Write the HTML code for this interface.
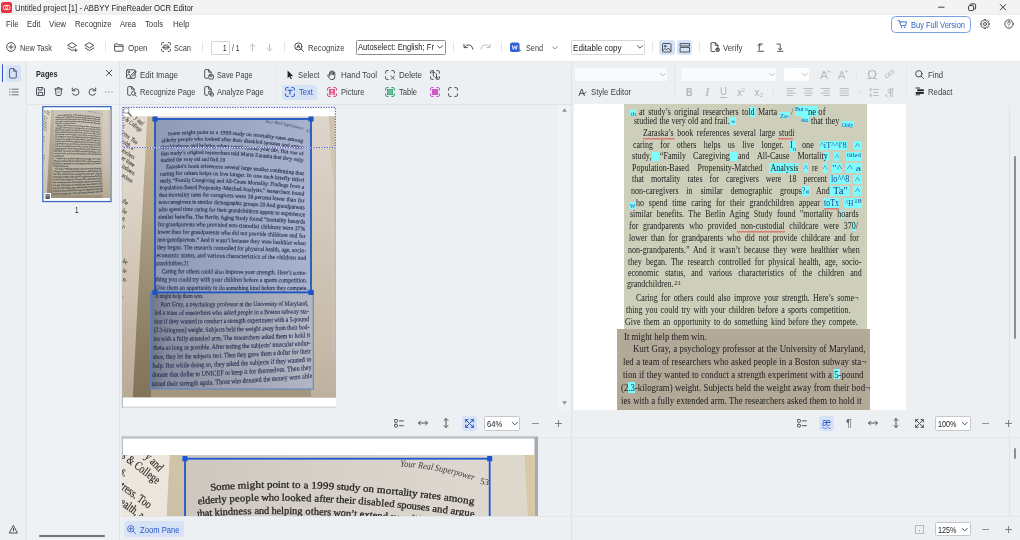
<!DOCTYPE html>
<html><head><meta charset="utf-8"><title>ABBYY FineReader OCR Editor</title>
<style>
*{box-sizing:border-box;margin:0;padding:0}
html,body{width:1020px;height:540px;overflow:hidden;background:#ecf0f3;font-family:"Liberation Sans",sans-serif;color:#2b2b2b}
#app{position:relative;width:1020px;height:540px;overflow:hidden}
.abs{position:absolute}
.t{position:absolute;white-space:pre;font-size:8.6px;line-height:12px;height:12px;color:#3a3d42;transform-origin:0 50%}
svg{position:absolute;overflow:visible}
.ic{stroke:#4d525a;fill:none;stroke-width:1;stroke-linecap:round;stroke-linejoin:round}
.ig{stroke:#b9bec6;fill:none;stroke-width:1;stroke-linecap:round;stroke-linejoin:round}
.sep{position:absolute;width:1px;background:#dcdfe4}

</style></head><body><div id="app">
<div class="abs" style="left:0px;top:0px;width:1020px;height:15.3px;background:linear-gradient(#f3f3f3 0,#f3f3f3 12.800px,#eeeeee 13.800px,#f0f0f0 14.600px,#fbfbfb 15.300px)"></div>
<div class="abs" style="left:0px;top:15.3px;width:1020px;height:45.7px;background:#fff"></div>
<div class="abs" style="left:0px;top:61px;width:1020px;height:1px;background:#e7eaed"></div>
<svg style="left:1px;top:2px" width="11" height="11" viewBox="0 0 11 11" ><rect x="0" y="0" width="11" height="11" rx="2.6" fill="#e8323c"/><circle cx="4.4" cy="5.5" r="2.3" fill="none" stroke="#fff" stroke-width="0.8"/><circle cx="6.8" cy="5.5" r="2.3" fill="none" stroke="#fff" stroke-width="0.8"/></svg>
<span class="t" style="left:15px;top:2px;font-size:8.8px;color:#1f1f1f;transform:scaleX(0.878);">Untitled project [1] - ABBYY FineReader OCR Editor</span>
<svg style="left:936px;top:2px" width="80" height="12" viewBox="0 0 80 12" ><path d="M2 5.2h6.5" stroke="#333" stroke-width="0.9" fill="none"/><rect x="32.6" y="3.6" width="5" height="5" rx="1" stroke="#222" stroke-width="0.9" fill="none"/><path d="M34.2 3.4v-0.6q0-0.9 0.9-0.9h3.3q1.2 0 1.2 1.2v3.2q0 0.9-0.9 0.9h-0.7" stroke="#222" stroke-width="0.9" fill="none"/><path d="M64 2.2l6 6M70 2.2l-6 6" stroke="#222" stroke-width="0.9" fill="none"/></svg>
<span class="t" style="left:5.5px;top:18.3px;font-size:8.8px;color:#33363b;transform:scaleX(0.881);">File</span>
<span class="t" style="left:26.7px;top:18.3px;font-size:8.8px;color:#33363b;transform:scaleX(0.877);">Edit</span>
<span class="t" style="left:49px;top:18.3px;font-size:8.8px;color:#33363b;transform:scaleX(0.898);">View</span>
<span class="t" style="left:74.5px;top:18.3px;font-size:8.8px;color:#33363b;transform:scaleX(0.878);">Recognize</span>
<span class="t" style="left:120px;top:18.3px;font-size:8.8px;color:#33363b;transform:scaleX(0.861);">Area</span>
<span class="t" style="left:145px;top:18.3px;font-size:8.8px;color:#33363b;transform:scaleX(0.876);">Tools</span>
<span class="t" style="left:172.5px;top:18.3px;font-size:8.8px;color:#33363b;transform:scaleX(0.912);">Help</span>
<div class="abs" style="left:891px;top:15.5px;width:79.5px;height:17.5px;border:1px solid #7a9fe3;border-radius:4.5px;background:#fff"></div>
<svg style="left:896.5px;top:19px" width="11" height="10" viewBox="0 0 11 10" ><path d="M1 1.6h1.4l1.5 5h4.6l1.1-3.7H3.2" stroke="#2f62c5" stroke-width="0.9" fill="none" stroke-linejoin="round" stroke-linecap="round"/><circle cx="4.6" cy="8.3" r="0.7" fill="#2f62c5"/><circle cx="7.8" cy="8.3" r="0.7" fill="#2f62c5"/></svg>
<span class="t" style="left:911px;top:19px;font-size:8.8px;color:#2f62c5;transform:scaleX(0.850);">Buy Full Version</span>
<svg style="left:980px;top:19px" width="10" height="10" viewBox="0 0 10 10" ><path d="M8.26 3.72L8.42 4.26L9.44 4.26L9.44 5.74L8.42 5.74L8.21 6.40L7.94 6.89L8.66 7.62L7.62 8.66L6.89 7.94L6.28 8.26L5.74 8.42L5.74 9.44L4.26 9.44L4.26 8.42L3.60 8.21L3.11 7.94L2.38 8.66L1.34 7.62L2.06 6.89L1.74 6.28L1.58 5.74L0.56 5.74L0.56 4.26L1.58 4.26L1.79 3.60L2.06 3.11L1.34 2.38L2.38 1.34L3.11 2.06L3.72 1.74L4.26 1.58L4.26 0.56L5.74 0.56L5.74 1.58L6.40 1.79L6.89 2.06L7.62 1.34L8.66 2.38L7.94 3.11z" class="ic" stroke-width="0.700"/><circle cx="5" cy="5" r="1.500" class="ic" stroke-width="0.700"/></svg>
<svg style="left:1004px;top:19px" width="10" height="10" viewBox="0 0 10 10" ><circle cx="5" cy="5" r="4.2" class="ic" stroke-width="0.8"/><path d="M3.7 4q0-1.4 1.3-1.4t1.3 1.2q0 0.8-0.7 1.2t-0.6 1" class="ic" stroke-width="0.8"/><circle cx="5" cy="7.5" r="0.45" fill="#4d525a"/></svg>
<svg style="left:5.7px;top:42px" width="10" height="10" viewBox="0 0 10 10" ><circle cx="5" cy="5" r="4.4" class="ic" stroke-width="0.8"/><path d="M5 2.9v4.2M2.9 5h4.2" class="ic" stroke-width="0.8"/></svg>
<span class="t" style="left:20px;top:41.5px;font-size:8.8px;color:#3a3d42;transform:scaleX(0.842);">New Task</span>
<svg style="left:66.5px;top:42px" width="11" height="11" viewBox="0 0 11 11" ><path d="M5.200 0.800l4.300 2.600-4.300 2.600-4.300-2.600z" class="ic" stroke-width="0.8"/><path d="M0.900 6l4.300 2.600 1.500-0.900" class="ic" stroke-width="0.8"/><path d="M8.700 6.800v2.800M7.300 8.200h2.800" class="ic" stroke-width="0.8"/></svg>
<svg style="left:83.5px;top:42px" width="11" height="11" viewBox="0 0 11 11" ><path d="M5.500 0.800l4.300 2.600-4.300 2.600-4.300-2.600z" class="ic" stroke-width="0.8"/><path d="M1.200 6l4.300 2.600 4.300-2.600" class="ic" stroke-width="0.8"/></svg>
<div class="sep" style="left:104.5px;top:42px;height:10px;background:#e4e6e9"></div>
<svg style="left:114.3px;top:43px" width="10" height="9" viewBox="0 0 10 9" ><path d="M0.600 1.600q0-0.800 0.800-0.800h2l0.900 1h3.900q0.800 0 0.800 0.800v4.800q0 0.800-0.800 0.800h-6.800q-0.800 0-0.800-0.800zM0.600 3.300h8.400" class="ic" stroke-width="0.8"/></svg>
<span class="t" style="left:127.5px;top:41.5px;font-size:8.8px;color:#3a3d42;transform:scaleX(0.906);">Open</span>
<svg style="left:161px;top:42px" width="10" height="10" viewBox="0 0 10 10" ><path d="M0.600 2.800v-1.400q0-0.800 0.800-0.800h1.400M7.200 0.600h1.400q0.800 0 0.800 0.800v1.400M9.400 7.200v1.400q0 0.800-0.800 0.800h-1.400M2.800 9.400h-1.400q-0.800 0-0.800-0.800v-1.400" class="ic" stroke-width="0.700"/><path d="M2.900 5.200v-1.600q0-0.500 0.500-0.500h3.200q0.500 0 0.500 0.500v1.600M2.900 5.200v1.300q0 0.500 0.500 0.500h3.200q0.500 0 0.500-0.500v-1.300" class="ic" stroke-width="0.650"/><path d="M1.200 5.200h7.600" class="ic" stroke-width="0.700"/></svg>
<span class="t" style="left:174px;top:41.5px;font-size:8.8px;color:#3a3d42;transform:scaleX(0.847);">Scan</span>
<div class="sep" style="left:202px;top:42px;height:10px;background:#e4e6e9"></div>
<div class="abs" style="left:211px;top:40.5px;width:18.5px;height:14px;border:1px solid #d0d3d7;border-radius:1px;background:#fff"></div>
<span class="t" style="left:222.5px;top:41.7px;font-size:8.8px;color:#222;transform:scaleX(0.713);">1</span>
<span class="t" style="left:232px;top:41.7px;font-size:8.8px;color:#333;transform:scaleX(0.767);">/ 1</span>
<svg style="left:247.5px;top:42.5px" width="9" height="9" viewBox="0 0 9 9" ><path d="M4.500 8v-6.800M1.800 3.800l2.700-2.700 2.700 2.700" class="ig" stroke-width="0.8"/></svg>
<svg style="left:264.5px;top:42.5px" width="9" height="9" viewBox="0 0 9 9" ><path d="M4.500 1v6.800M1.800 5.200l2.700 2.700 2.700-2.700" class="ig" stroke-width="0.8"/></svg>
<div class="sep" style="left:284px;top:42px;height:10px;background:#e4e6e9"></div>
<svg style="left:294px;top:42px" width="10" height="10" viewBox="0 0 10 10" ><circle cx="4.400" cy="4.400" r="3.600" class="ic" stroke-width="0.8"/><path d="M7 7l2.400 2.400" class="ic" stroke-width="0.8"/><path d="M2.900 6l1.500-3.400 1.500 3.400M3.500 4.900h1.800" class="ic" stroke-width="0.600"/></svg>
<span class="t" style="left:307.5px;top:41.5px;font-size:8.8px;color:#3a3d42;transform:scaleX(0.878);">Recognize</span>
<div class="abs" style="left:355.5px;top:40px;width:90.5px;height:14.5px;border:1px solid #8a8d92;border-radius:1.500px;background:#fff"></div>
<span class="t" style="left:358px;top:41.3px;font-size:8.8px;color:#222;transform:scaleX(0.863);">Autoselect: English; Fr</span>
<svg style="left:437px;top:45px" width="6" height="4" viewBox="0 0 6 4" ><path d="M0.500 0.700l2.500 2.500 2.500-2.500" class="ic" stroke-width="0.700"/></svg>
<div class="sep" style="left:452.5px;top:42px;height:10px;background:#e4e6e9"></div>
<svg style="left:462.5px;top:42.5px" width="11" height="8" viewBox="0 0 11 8" ><path d="M1 1.300v3.300h3.300M1.300 4.400q2-2.900 4.900-2.600 3 0.400 3.700 4.400" class="ic" stroke-width="0.800"/></svg>
<svg style="left:479.5px;top:42.5px" width="11" height="8" viewBox="0 0 11 8" ><path d="M10 1.300v3.300h-3.300M9.700 4.400q-2-2.900-4.900-2.600-3 0.400-3.700 4.400" class="ig" stroke-width="0.800"/></svg>
<div class="sep" style="left:501px;top:42px;height:10px;background:#e4e6e9"></div>
<svg style="left:509.5px;top:42px" width="11" height="11" viewBox="0 0 11 11" ><rect x="0" y="0.500" width="9.500" height="9.500" rx="2" fill="#2c5fd8"/><path d="M2.200 3.200l1.100 4.200 1.400-3.600 1.400 3.600 1.100-4.200" stroke="#fff" stroke-width="0.900" fill="none" stroke-linejoin="round"/><path d="M7.500 8.500h3M9.300 7.200l1.300 1.300-1.300 1.300" stroke="#555" stroke-width="0.700" fill="none"/></svg>
<span class="t" style="left:526px;top:41.5px;font-size:8.8px;color:#3a3d42;transform:scaleX(0.827);">Send</span>
<svg style="left:551.5px;top:45.5px" width="6" height="4" viewBox="0 0 6 4" ><path d="M0.500 0.700l2.300 2.300 2.300-2.300" class="ic" style="stroke:#888" stroke-width="0.700"/></svg>
<div class="abs" style="left:571px;top:40px;width:74px;height:14.5px;border:1px solid #d4d6da;border-radius:1.500px;background:#fff"></div>
<span class="t" style="left:572.5px;top:41.7px;font-size:9.2px;color:#222;transform:scaleX(0.879);">Editable copy</span>
<svg style="left:636.5px;top:45px" width="6" height="4" viewBox="0 0 6 4" ><path d="M0.500 0.700l2.500 2.500 2.500-2.500" class="ic" stroke-width="0.700"/></svg>
<div class="sep" style="left:652px;top:42px;height:10px;background:#e4e6e9"></div>
<div class="abs" style="left:659px;top:39.5px;width:15.5px;height:15.5px;background:#d5e3f8;border-radius:3px"></div>
<div class="abs" style="left:676.5px;top:39.5px;width:15.5px;height:15.5px;background:#d5e3f8;border-radius:3px"></div>
<svg style="left:662px;top:42.5px" width="10" height="10" viewBox="0 0 10 10" ><rect x="0.500" y="0.500" width="8.500" height="8.500" rx="0.800" class="ic" stroke-width="0.8"/><circle cx="3.100" cy="3.200" r="0.900" class="ic" stroke-width="0.700"/><path d="M0.700 7.800l2.400-2.400 1.600 1.600 1.600-2 2.600 3" class="ic" stroke-width="0.700"/></svg>
<svg style="left:679.5px;top:42.5px" width="10" height="10" viewBox="0 0 10 10" ><rect x="0.500" y="0.600" width="9" height="2.400" class="ic" stroke-width="0.800" fill="#4d525a"/><rect x="0.500" y="4.400" width="9" height="4.600" class="ic" stroke-width="0.8"/></svg>
<div class="sep" style="left:699px;top:42px;height:10px;background:#e4e6e9"></div>
<svg style="left:709.5px;top:42px" width="11" height="11" viewBox="0 0 11 11" ><path d="M1 1.500q0-0.800 0.800-0.800h3.600l2.600 2.600v2.200M4.600 9.600h-2.800q-0.800 0-0.800-0.800v-7.300M5.300 0.800v2.600h2.600" class="ic" stroke-width="0.8"/><circle cx="7.600" cy="7.800" r="2.300" fill="#4d525a"/><path d="M6.500 7.800l0.800 0.800 1.400-1.500" stroke="#fff" stroke-width="0.600" fill="none"/></svg>
<span class="t" style="left:723px;top:41.5px;font-size:8.8px;color:#3a3d42;transform:scaleX(0.886);">Verify</span>
<svg style="left:757px;top:42.5px" width="8" height="9" viewBox="0 0 8 9" ><path d="M5.500 1h-3.200v6M0.800 2.500l1.500-1.500 1.500 1.500M1 8.300h5.500" class="ic" stroke-width="0.8"/></svg>
<svg style="left:776px;top:42.5px" width="8" height="9" viewBox="0 0 8 9" ><path d="M1 1h3.200v6M2.700 5.500l1.500 1.500 1.500-1.500M1.500 8.300h5.500" class="ic" stroke-width="0.8"/></svg>
<div class="abs" style="left:0px;top:61px;width:26px;height:479px;background:#ecf0f3"></div>
<div class="abs" style="left:26px;top:61px;width:93.5px;height:479px;background:#eff2f5"></div>
<div class="sep" style="left:26px;top:61px;height:479px;background:#e1e5ea"></div>
<div class="sep" style="left:119px;top:61px;height:479px;background:#dfe3e8"></div>
<div class="abs" style="left:1.5px;top:64px;width:1.7px;height:18px;background:#2b57c6;border-radius:1px"></div>
<div class="abs" style="left:5.7px;top:65px;width:15.8px;height:16.5px;background:#d6e3f7;border-radius:3px"></div>
<svg style="left:9px;top:67.5px" width="8" height="10.5" viewBox="0 0 8 10.5" ><path d="M0.600 1.600q0-1 1-1h3.200l2.500 2.500v6q0 1-1 1h-4.700q-1 0-1-1zM4.700 0.700v2.500h2.500" stroke="#3b4d7a" stroke-width="0.900" fill="none" stroke-linejoin="round"/></svg>
<svg style="left:8.5px;top:88px" width="10" height="8" viewBox="0 0 10 8" ><path d="M3 1.200h6.200M3 4h6.200M3 6.800h6.200" class="ic" style="stroke:#6a6f78" stroke-width="0.800"/><path d="M0.600 1.200h0.600M0.600 4h0.600M0.600 6.800h0.600" class="ic" style="stroke:#6a6f78" stroke-width="0.800"/></svg>
<span class="t" style="left:36px;top:67.8px;font-size:9px;color:#1f2328;transform:scaleX(0.810);font-weight:bold;">Pages</span>
<svg style="left:106px;top:69.8px" width="6" height="6" viewBox="0 0 6 6" ><path d="M0.400 0.400l5.200 5.200M5.600 0.400l-5.200 5.200" class="ic" stroke-width="0.700"/></svg>
<svg style="left:36.3px;top:87px" width="9" height="9" viewBox="0 0 9 9" ><path d="M0.500 1.300q0-0.800 0.800-0.800h5.700l1.500 1.500v5.700q0 0.800-0.800 0.800h-6.400q-0.800 0-0.800-0.800zM2.300 0.600v2.500h3.800v-2.500M2.300 8.400v-3h4.400v3" class="ic" stroke-width="0.8"/></svg>
<svg style="left:53.5px;top:87px" width="9" height="9" viewBox="0 0 9 9" ><path d="M0.600 2h7.800M3 1.900v-0.800q0-0.500 0.500-0.500h2q0.500 0 0.500 0.500v0.800M1.500 2.100l0.500 5.600q0.100 0.800 0.900 0.800h3.200q0.800 0 0.900-0.800l0.500-5.600" class="ic" stroke-width="0.8"/><rect x="3.400" y="3.800" width="2.200" height="2.600" fill="#b5bac2"/></svg>
<svg style="left:70.5px;top:87px" width="9" height="9" viewBox="0 0 9 9" ><path d="M1.300 1v2.800h2.800M1.500 3.700q1.200-1.900 3.300-1.900 3.200 0 3.200 3.300 0 3.200-3.400 3.200-2.300 0-3.100-1.900" class="ic" stroke-width="0.8"/></svg>
<svg style="left:87.5px;top:87px" width="9" height="9" viewBox="0 0 9 9" ><path d="M7.700 1v2.800h-2.800M7.500 3.700q-1.200-1.900-3.300-1.900-3.200 0-3.200 3.300 0 3.200 3.400 3.200 2.300 0 3.100-1.900" class="ic" stroke-width="0.8"/></svg>
<svg style="left:105px;top:90.5px" width="8" height="2" viewBox="0 0 8 2" ><circle cx="1" cy="1" r="0.550" fill="#4d525a"/><circle cx="4" cy="1" r="0.550" fill="#4d525a"/><circle cx="7" cy="1" r="0.550" fill="#4d525a"/></svg>
<div class="abs" style="left:26.5px;top:104px;width:93px;height:1px;background:#e1e5ea"></div>
<svg style="left:126.2px;top:69.4px" width="10" height="10" viewBox="0 0 10 10" ><rect x="0.500" y="0.800" width="8.600" height="8.600" rx="1" class="ic" stroke-width="0.8"/><path d="M0.700 7l2-2 1.500 1.500" class="ic" stroke-width="0.700"/><circle cx="2.800" cy="3" r="0.800" class="ic" stroke-width="0.600"/><path d="M4.200 8.200l0.400-1.700 4.200-4.200q0.600-0.600 1.200 0t0 1.200l-4.200 4.200z" class="ic" stroke-width="0.700" fill="#edf1f5"/></svg>
<span class="t" style="left:140px;top:68.9px;font-size:8.8px;color:#3a3d42;transform:scaleX(0.903);">Edit Image</span>
<svg style="left:204px;top:69.2px" width="10" height="10.5" viewBox="0 0 10 10.5" ><path d="M3.600 9.200h-2.100q-0.800 0-0.800-0.800v-7q0-0.800 0.800-0.800h3.200l2.500 2.500v1.400M4.600 0.700v2.500h2.500" class="ic" stroke-width="0.8"/><rect x="4.800" y="5.800" width="4.600" height="4.200" rx="0.600" class="ic" stroke-width="0.700"/><path d="M6 5.900v1.300h2v-1.300" class="ic" stroke-width="0.600"/></svg>
<span class="t" style="left:216.8px;top:68.9px;font-size:8.8px;color:#3a3d42;transform:scaleX(0.827);">Save Page</span>
<svg style="left:126.5px;top:86.4px" width="10" height="10.5" viewBox="0 0 10 10.5" ><path d="M3.600 9.200h-2.100q-0.800 0-0.800-0.800v-7q0-0.800 0.800-0.800h3.200l2.500 2.500v1.400M4.600 0.700v2.500h2.500" class="ic" stroke-width="0.8"/><circle cx="6.400" cy="7.300" r="1.900" class="ic" stroke-width="0.700"/><path d="M7.800 8.700l1.500 1.500" class="ic" stroke-width="0.8"/></svg>
<span class="t" style="left:140px;top:86.2px;font-size:8.8px;color:#3a3d42;transform:scaleX(0.857);">Recognize Page</span>
<svg style="left:204px;top:86.4px" width="10" height="10.5" viewBox="0 0 10 10.5" ><path d="M3.600 9.200h-2.100q-0.800 0-0.800-0.800v-7q0-0.800 0.800-0.800h3.200l2.500 2.500v1.400M4.600 0.700v2.500h2.500" class="ic" stroke-width="0.8"/><rect x="4.700" y="5.400" width="3" height="3" rx="0.500" class="ic" stroke-width="0.700"/><rect x="6.400" y="7" width="3" height="3" rx="0.500" class="ic" stroke-width="0.700" fill="#edf1f5"/></svg>
<span class="t" style="left:216.8px;top:86.2px;font-size:8.8px;color:#3a3d42;transform:scaleX(0.862);">Analyze Page</span>
<div class="sep" style="left:274.5px;top:66px;height:34px;background:#e4e7eb"></div>
<svg style="left:287px;top:69.5px" width="6" height="10" viewBox="0 0 6 10" ><path d="M0.600 0.600v7.600l1.900-1.700 1.300 2.800 1.100-0.500-1.300-2.700h2.500z" fill="#222" stroke="none"/></svg>
<span class="t" style="left:298px;top:68.9px;font-size:8.8px;color:#3a3d42;transform:scaleX(0.879);">Select</span>
<svg style="left:327px;top:69.5px" width="10" height="10" viewBox="0 0 10 10" ><path d="M2.600 5.800v-3.300q0-0.700 0.650-0.700t0.650 0.700v-1q0-0.700 0.650-0.700t0.650 0.700v0.300q0-0.700 0.650-0.700t0.650 0.700v0.900q0-0.700 0.650-0.700t0.650 0.700v4q0 3-2.800 3-1.700 0-2.700-1.500l-1.600-2.400q-0.400-0.700 0.200-1t1.100 0.300z" class="ic" stroke-width="0.700"/><path d="M3.900 2.500v2.200M5.200 2v2.700M6.500 2.500v2.200" class="ic" stroke-width="0.600"/></svg>
<span class="t" style="left:341px;top:68.9px;font-size:8.8px;color:#3a3d42;transform:scaleX(0.912);">Hand Tool</span>
<svg style="left:385px;top:69.5px" width="10" height="10" viewBox="0 0 10 10" ><path d="M0.6 3.2v-1.4000000000000001q0 -1.2 1.2 -1.2h1.4000000000000001M6.800000000000001 0.6h1.4000000000000001q1.2 0 1.2 1.2v1.4000000000000001M3.2 9.4h-1.4000000000000001q-1.2 0 -1.2 -1.2v-1.4000000000000001" class="ic" stroke-width="0.8"/><path d="M6 6l3.400 3.400M9.400 6l-3.400 3.400" class="ic" stroke-width="0.800"/><rect x="5" y="5" width="5" height="5" fill="none"/></svg>
<span class="t" style="left:399px;top:68.9px;font-size:8.8px;color:#3a3d42;transform:scaleX(0.904);">Delete</span>
<svg style="left:430px;top:69.5px" width="10" height="10" viewBox="0 0 10 10" ><path d="M0.6 3.2v-1.4000000000000001q0 -1.2 1.2 -1.2h1.4000000000000001M6.800000000000001 0.6h1.4000000000000001q1.2 0 1.2 1.2v1.4000000000000001M9.4 6.800000000000001v1.4000000000000001q0 1.2 -1.2 1.2h-1.4000000000000001M3.2 9.4h-1.4000000000000001q-1.2 0 -1.2 -1.2v-1.4000000000000001" class="ic" stroke-width="0.8"/><path d="M6.500 4v4.600M4.800 7l1.700 1.700 1.700-1.700M3.400 6v-4.600M1.700 3l1.700-1.700 1.700 1.700" class="ic" stroke-width="0.700"/></svg>
<div class="abs" style="left:282px;top:85px;width:35px;height:14.5px;background:#d6e3f7;border-radius:3px"></div>
<svg style="left:284.6px;top:86.7px" width="10" height="10" viewBox="0 0 10 10" ><path d="M0.6 3.2v-1.4000000000000001q0 -1.2 1.2 -1.2h1.4000000000000001M6.800000000000001 0.6h1.4000000000000001q1.2 0 1.2 1.2v1.4000000000000001M9.4 6.800000000000001v1.4000000000000001q0 1.2 -1.2 1.2h-1.4000000000000001M3.2 9.4h-1.4000000000000001q-1.2 0 -1.2 -1.2v-1.4000000000000001" class="ic" style="stroke:#2b57c6" stroke-width="0.8"/><path d="M3 3.200h4M5 3.200v4" stroke="#2b57c6" stroke-width="1.100" fill="none" stroke-linecap="round"/></svg>
<span class="t" style="left:299px;top:86.2px;font-size:8.8px;color:#2b57c6;transform:scaleX(0.867);">Text</span>
<svg style="left:327px;top:86.7px" width="10" height="10" viewBox="0 0 10 10" ><path d="M0.6 3.2v-1.4000000000000001q0 -1.2 1.2 -1.2h1.4000000000000001M6.800000000000001 0.6h1.4000000000000001q1.2 0 1.2 1.2v1.4000000000000001M9.4 6.800000000000001v1.4000000000000001q0 1.2 -1.2 1.2h-1.4000000000000001M3.2 9.4h-1.4000000000000001q-1.2 0 -1.2 -1.2v-1.4000000000000001" class="ic" style="stroke:#d23a7a" stroke-width="0.8"/><rect x="2" y="2" width="6" height="6" rx="0.800" fill="#e4568f"/><circle cx="5" cy="4.100" r="1" fill="#fbe3ec"/><path d="M2.800 7.600q2.200-2.800 4.400 0z" fill="#fbe3ec"/></svg>
<span class="t" style="left:341px;top:86.2px;font-size:8.8px;color:#3a3d42;transform:scaleX(0.858);">Picture</span>
<svg style="left:385px;top:86.7px" width="10" height="10" viewBox="0 0 10 10" ><path d="M0.6 3.2v-1.4000000000000001q0 -1.2 1.2 -1.2h1.4000000000000001M6.800000000000001 0.6h1.4000000000000001q1.2 0 1.2 1.2v1.4000000000000001M9.4 6.800000000000001v1.4000000000000001q0 1.2 -1.2 1.2h-1.4000000000000001M3.2 9.4h-1.4000000000000001q-1.2 0 -1.2 -1.2v-1.4000000000000001" class="ic" style="stroke:#1f9d6b" stroke-width="0.8"/><rect x="2" y="2" width="6" height="6" rx="0.500" fill="#1f9d6b"/><path d="M2 4h6M2 6h6M4 2v6M6 2v6" stroke="#cdeadf" stroke-width="0.500"/></svg>
<span class="t" style="left:399px;top:86.2px;font-size:8.8px;color:#3a3d42;transform:scaleX(0.856);">Table</span>
<svg style="left:430px;top:86.7px" width="10" height="10" viewBox="0 0 10 10" ><path d="M0.6 3.2v-1.4000000000000001q0 -1.2 1.2 -1.2h1.4000000000000001M6.800000000000001 0.6h1.4000000000000001q1.2 0 1.2 1.2v1.4000000000000001M9.4 6.800000000000001v1.4000000000000001q0 1.2 -1.2 1.2h-1.4000000000000001M3.2 9.4h-1.4000000000000001q-1.2 0 -1.2 -1.2v-1.4000000000000001" class="ic" style="stroke:#c24ad0" stroke-width="0.8"/><rect x="1.900" y="1.900" width="6.200" height="6.200" rx="0.900" fill="#cf58c8"/></svg>
<svg style="left:447.5px;top:86.7px" width="10" height="10" viewBox="0 0 10 10" ><path d="M0.6 3.2v-1.4000000000000001q0 -1.2 1.2 -1.2h1.4000000000000001M6.800000000000001 0.6h1.4000000000000001q1.2 0 1.2 1.2v1.4000000000000001M9.4 6.800000000000001v1.4000000000000001q0 1.2 -1.2 1.2h-1.4000000000000001M3.2 9.4h-1.4000000000000001q-1.2 0 -1.2 -1.2v-1.4000000000000001" class="ic" stroke-width="0.8"/></svg>
<div class="sep" style="left:570.5px;top:61px;height:479px;background:#dfe3e8"></div>
<div class="abs" style="left:574.8px;top:68px;width:92px;height:13px;background:#f8fafc;border-radius:1.500px"></div>
<svg style="left:659.5px;top:73px" width="6" height="4" viewBox="0 0 6 4" ><path d="M0.500 0.600l2.300 2.300 2.300-2.300" class="ig" stroke-width="0.700"/></svg>
<div class="sep" style="left:674.4px;top:64px;height:36px;background:#e2e6ea"></div>
<div class="abs" style="left:681.4px;top:68px;width:94.5px;height:13px;background:#f8fafc;border-radius:1.500px"></div>
<svg style="left:768.5px;top:73px" width="6" height="4" viewBox="0 0 6 4" ><path d="M0.500 0.600l2.300 2.300 2.300-2.300" class="ig" stroke-width="0.700"/></svg>
<div class="abs" style="left:783.8px;top:68px;width:25.7px;height:13px;background:#fdfdfe;border-radius:1.500px"></div>
<svg style="left:801.5px;top:73px" width="6" height="4" viewBox="0 0 6 4" ><path d="M0.500 0.600l2.300 2.300 2.300-2.300" class="ig" stroke-width="0.700"/></svg>
<span class="t" style="left:819.5px;top:69.2px;font-size:11.5px;color:#b4b9c0;transform:scaleX(1.043);">A</span>
<svg style="left:826.5px;top:69.5px" width="4" height="3" viewBox="0 0 4 3" ><path d="M0.400 2.200l1.300-1.500 1.300 1.500" class="ig" stroke-width="0.600"/></svg>
<span class="t" style="left:838px;top:69.2px;font-size:11px;color:#b4b9c0;transform:scaleX(1.021);">A</span>
<svg style="left:844.5px;top:69.5px" width="4" height="3" viewBox="0 0 4 3" ><path d="M0.400 0.700l1.300 1.500 1.300-1.500" class="ig" stroke-width="0.600"/></svg>
<div class="sep" style="left:856px;top:69px;height:11px;background:#e6e9ec"></div>
<span class="t" style="left:866.8px;top:69px;font-size:12px;color:#b4b9c0;transform:scaleX(1.135);">Ω</span>
<svg style="left:883.5px;top:69.3px" width="11" height="10" viewBox="0 0 11 10" ><path d="M4.700 6.300q-1.200-1.200 0-2.400l2-2q1.200-1.200 2.400 0t0 2.400l-1 1M6.300 3.700q1.200 1.200 0 2.400l-2 2q-1.200 1.200-2.400 0t0-2.400l1-1" class="ig" stroke-width="0.800"/></svg>
<div class="sep" style="left:906px;top:66px;height:34px;background:#e4e7eb"></div>
<svg style="left:914.5px;top:69.5px" width="9" height="9" viewBox="0 0 9 9" ><circle cx="3.800" cy="3.800" r="3.200" class="ic" stroke-width="0.800"/><path d="M6.200 6.200l2.400 2.400" class="ic" stroke-width="0.800"/></svg>
<span class="t" style="left:928px;top:68.9px;font-size:8.8px;color:#3a3d42;transform:scaleX(0.876);">Find</span>
<svg style="left:914.5px;top:87px" width="10" height="9" viewBox="0 0 10 9" ><path d="M0.500 1h4.500M0.500 7.800h4.500" stroke="#222" stroke-width="0.900" fill="none"/><rect x="2.200" y="2.300" width="6.600" height="1.900" fill="#222"/><rect x="0.800" y="5" width="8" height="1.900" fill="#222"/></svg>
<span class="t" style="left:928px;top:86.2px;font-size:8.8px;color:#3a3d42;transform:scaleX(0.879);">Redact</span>
<svg style="left:577.5px;top:87.5px" width="9" height="9" viewBox="0 0 9 9" ><path d="M1 7.600l2.700-6.600 2.700 6.600M1.900 5.400h3.600" class="ic" stroke-width="0.800"/><path d="M5.700 6.200l2.300-2.300" class="ic" stroke-width="0.800"/></svg>
<span class="t" style="left:590.5px;top:86.2px;font-size:8.8px;color:#3a3d42;transform:scaleX(0.894);">Style Editor</span>
<span class="t" style="left:685.8px;top:86.4px;font-size:11.5px;color:#aeb3ba;transform:scaleX(0.782);font-weight:bold;">B</span>
<span class="t" style="left:704.5px;top:85.9px;font-size:12px;color:#aeb3ba;transform:scaleX(1.125);font-family:'Liberation Serif',serif;font-style:italic;">I</span>
<span class="t" style="left:719.5px;top:86.2px;font-size:10px;color:#aeb3ba;transform:scaleX(0.968);">U</span>
<div class="abs" style="left:719.5px;top:97px;width:7px;height:0.8px;background:#b9bec6"></div>
<span class="t" style="left:737px;top:86.5px;font-size:10px;color:#aeb3ba;transform:scaleX(1.000);">x</span>
<span class="t" style="left:742.3px;top:83.9px;font-size:5.5px;color:#aeb3ba;transform:scaleX(0.980);">2</span>
<span class="t" style="left:754.5px;top:86.5px;font-size:10px;color:#aeb3ba;transform:scaleX(1.000);">x</span>
<span class="t" style="left:759.8px;top:89.2px;font-size:5.5px;color:#aeb3ba;transform:scaleX(0.980);">2</span>
<div class="sep" style="left:772.7px;top:87px;height:10px;background:#e2e6ea"></div>
<svg style="left:786.5px;top:88.2px" width="9" height="8" viewBox="0 0 9 8" ><path d="M0 0.5h8.5M0 2.8h5.5M0 5.1h8.5M0 7.3999999999999995h5.5" class="ig" stroke-width="0.800"/></svg>
<svg style="left:803.5px;top:88.2px" width="9" height="8" viewBox="0 0 9 8" ><path d="M0 0.5h8.5M1.5 2.8h5.5M0 5.1h8.5M1.5 7.3999999999999995h5.5" class="ig" stroke-width="0.800"/></svg>
<svg style="left:820.5px;top:88.2px" width="9" height="8" viewBox="0 0 9 8" ><path d="M0 0.5h8.5M3 2.8h5.5M0 5.1h8.5M3 7.3999999999999995h5.5" class="ig" stroke-width="0.800"/></svg>
<svg style="left:839.5px;top:88.2px" width="9" height="8" viewBox="0 0 9 8" ><path d="M0 0.5h8.5M0 2.8h8.5M0 5.1h8.5M0 7.3999999999999995h8.5" class="ig" stroke-width="0.800"/></svg>
<svg style="left:856.5px;top:89px" width="6" height="6" viewBox="0 0 6 6" ><path d="M0.600 3.200l1.700 1.700 3-3.800" stroke="#d5d9de" stroke-width="0.800" fill="none"/></svg>
<svg style="left:868.5px;top:87.5px" width="10" height="9" viewBox="0 0 10 9" ><path d="M1.800 0.600v2.600M0.600 1.800l1.200-1.200 1.200 1.200M1.800 8.400v-2.600M0.600 7.200l1.200 1.200 1.200-1.200M4.600 1.500h4.400M4.600 4.500h4.400M4.600 7.500h4.400" class="ig" stroke-width="0.700"/></svg>
<svg style="left:885px;top:87.5px" width="10" height="10" viewBox="0 0 10 10" ><path d="M5.500 8.800v-7.800h2.800M7.300 1v7.800M5.500 5.200q-2.600 0-2.600-2.100t2.600-2.100M0.800 7.600l1.500-1.500M0.800 7.600l1.500 1.500" class="ig" stroke-width="0.700"/></svg>
<div class="abs" style="left:574px;top:104.4px;width:332px;height:305.2px;background:#fff"></div>
<div class="abs" style="left:623.6px;top:104.4px;width:243.2px;height:224.3px;background:#cdcfbb"></div>
<div class="abs" style="left:616.8px;top:328.7px;width:253.5px;height:80.9px;background:#b3a999"></div>
<div class="abs" style="left:0;top:104.400px;width:1020px;height:305.200px;overflow:hidden"><div class="abs" style="left:0;top:-104.400px"><div class="abs" style="left:630.3px;top:109.8px;width:5.7px;height:6px;background:#7ffcff"></div><div class="abs" style="left:749.6px;top:107.05px;width:5.9px;height:9.5px;background:#7ffcff"></div><div class="abs" style="left:779px;top:111.8px;width:10px;height:6px;background:#7ffcff"></div><div class="abs" style="left:794.8px;top:106.05px;width:22.2px;height:9.5px;background:#7ffcff"></div><div class="abs" style="left:729.5px;top:117.3px;width:6.5px;height:8px;background:#7ffcff"></div><div class="abs" style="left:800.7px;top:116.3px;width:8.3px;height:6px;background:#7ffcff"></div><div class="abs" style="left:841.5px;top:120.55px;width:12.5px;height:6.5px;background:#7ffcff"></div><div class="abs" style="left:789.6px;top:141.3px;width:6.7px;height:11px;background:#7ffcff"></div><div class="abs" style="left:819.7px;top:140.75px;width:27.7px;height:9.5px;background:#7ffcff"></div><div class="abs" style="left:852.6px;top:140.75px;width:9.6px;height:9.5px;background:#7ffcff"></div><div class="abs" style="left:652.2px;top:151.85px;width:6.8px;height:9.5px;background:#7ffcff"></div><div class="abs" style="left:730.3px;top:151.85px;width:6.4px;height:9.5px;background:#7ffcff"></div><div class="abs" style="left:823.7px;top:151.85px;width:5.3px;height:9.5px;background:#7ffcff"></div><div class="abs" style="left:834px;top:151.85px;width:5px;height:9.5px;background:#7ffcff"></div><div class="abs" style="left:845.5px;top:151.85px;width:16.7px;height:9.5px;background:#7ffcff"></div><div class="abs" style="left:768.9px;top:163.35px;width:29.6px;height:9.5px;background:#7ffcff"></div><div class="abs" style="left:803.7px;top:163.35px;width:4.4px;height:9.5px;background:#7ffcff"></div><div class="abs" style="left:823px;top:163.35px;width:4.4px;height:9.5px;background:#7ffcff"></div><div class="abs" style="left:831.6px;top:163.35px;width:10.6px;height:9.5px;background:#7ffcff"></div><div class="abs" style="left:845.5px;top:163.35px;width:16.7px;height:9.5px;background:#7ffcff"></div><div class="abs" style="left:830.4px;top:174.85px;width:19.2px;height:9.5px;background:#7ffcff"></div><div class="abs" style="left:852.9px;top:174.85px;width:9.3px;height:9.5px;background:#7ffcff"></div><div class="abs" style="left:801.5px;top:186.25px;width:8.1px;height:9.5px;background:#7ffcff"></div><div class="abs" style="left:830.4px;top:186.25px;width:18.5px;height:9.5px;background:#7ffcff"></div><div class="abs" style="left:852.9px;top:186.25px;width:9.3px;height:9.5px;background:#7ffcff"></div><div class="abs" style="left:630px;top:201.8px;width:6px;height:7px;background:#7ffcff"></div><div class="abs" style="left:823.7px;top:198.15px;width:15.6px;height:9.5px;background:#7ffcff"></div><div class="abs" style="left:843.7px;top:198.15px;width:18.5px;height:9.5px;background:#7ffcff"></div><div class="abs" style="left:840.7px;top:209.95px;width:3.7px;height:9.5px;background:#7ffcff"></div><div class="abs" style="left:851.9px;top:221.85px;width:3.7px;height:9.5px;background:#7ffcff"></div><div class="abs" style="left:833.8px;top:368.85px;width:5.9px;height:10.5px;background:#7ffcff"></div><div class="abs" style="left:627.7px;top:382.35px;width:7.8px;height:10.5px;background:#7ffcff"></div><span class="t" style="left:630.5px;top:107.5px;font-size:5.5px;color:#1d4f8f;transform:scaleX(1.168);font-family:'Liberation Serif',serif;">th</span><span class="t" style="left:638.9px;top:105.5px;font-size:10px;color:#1c1c1c;word-spacing:1.81px;transform:scaleX(0.8);font-family:'Liberation Serif',serif;">at study’s original researchers told Marta</span><span class="t" style="left:779.5px;top:109.5px;font-size:5.5px;color:#1d3f8f;transform:scaleX(1.178);font-family:'Liberation Serif',serif;">Za-</span><span class="t" style="left:790.8px;top:105.5px;font-size:10px;color:#555;transform:scaleX(0.791);font-family:'Liberation Serif',serif;">/</span><span class="t" style="left:795.2px;top:103px;font-size:5.5px;color:#1d3f8f;transform:scaleX(1.060);font-family:'Liberation Serif',serif;">But o</span><span class="t" style="left:808.4px;top:105.5px;font-size:10px;color:#1c1c1c;transform:scaleX(0.868);font-family:'Liberation Serif',serif;">ne of</span><span class="t" style="left:633.7px;top:114.5px;font-size:10px;color:#1c1c1c;word-spacing:0.40px;transform:scaleX(0.8);font-family:'Liberation Serif',serif;">studied the very old and frail.</span><span class="t" style="left:730.5px;top:115.3px;font-size:7px;color:#1d4f8f;transform:scaleX(1.286);font-family:'Liberation Serif',serif;">»</span><span class="t" style="left:801px;top:113.5px;font-size:5.5px;color:#1d3f8f;transform:scaleX(1.021);font-family:'Liberation Serif',serif;">ska</span><span class="t" style="left:810.8px;top:114.5px;font-size:10px;color:#1c1c1c;word-spacing:0.53px;transform:scaleX(0.8);font-family:'Liberation Serif',serif;">that they</span><span class="t" style="left:842px;top:118.5px;font-size:6px;color:#1d4fb0;transform:scaleX(0.958);font-family:'Liberation Serif',serif;">Only</span><span class="t" style="left:642.6px;top:127px;font-size:10px;color:#1c1c1c;word-spacing:1.96px;transform:scaleX(0.8);font-family:'Liberation Serif',serif;">Zaraska’s book references several large studi</span><svg style="left:642.6px;top:138px" width="32.9" height="2" viewBox="0 0 32.89999999999998 2" ><path d="M0 1.500l0.750 -1.5l0.750 1.5l0.750 -1.5l0.750 1.5l0.750 -1.5l0.750 1.5l0.750 -1.5l0.750 1.5l0.750 -1.5l0.750 1.5l0.750 -1.5l0.750 1.5l0.750 -1.5l0.750 1.5l0.750 -1.5l0.750 1.5l0.750 -1.5l0.750 1.5l0.750 -1.5l0.750 1.5l0.750 -1.5l0.750 1.5l0.750 -1.5l0.750 1.5l0.750 -1.5l0.750 1.5l0.750 -1.5l0.750 1.5l0.750 -1.5l0.750 1.5l0.750 -1.5l0.750 1.5l0.750 -1.5l0.750 1.5l0.750 -1.5l0.750 1.5l0.750 -1.5l0.750 1.5l0.750 -1.5l0.750 1.5l0.750 -1.5l0.750 1.5" stroke="#e0393e" stroke-width="0.500" fill="none"/></svg><svg style="left:778px;top:138.3px" width="16" height="2" viewBox="0 0 16 2" ><path d="M0 1.500l0.750 -1.5l0.750 1.5l0.750 -1.5l0.750 1.5l0.750 -1.5l0.750 1.5l0.750 -1.5l0.750 1.5l0.750 -1.5l0.750 1.5l0.750 -1.5l0.750 1.5l0.750 -1.5l0.750 1.5l0.750 -1.5l0.750 1.5l0.750 -1.5l0.750 1.5l0.750 -1.5l0.750 1.5" stroke="#e0393e" stroke-width="0.500" fill="none"/></svg><span class="t" style="left:632.5px;top:139.2px;font-size:10px;color:#1c1c1c;word-spacing:6.59px;transform:scaleX(0.8);font-family:'Liberation Serif',serif;">caring for others helps us live longer.</span><span class="t" style="left:790px;top:139.2px;font-size:10px;color:#1d3f8f;transform:scaleX(0.897);font-family:'Liberation Serif',serif;">I</span><span class="t" style="left:793.3px;top:143px;font-size:5.5px;color:#1d3f8f;transform:scaleX(1.091);font-family:'Liberation Serif',serif;">n</span><span class="t" style="left:801.5px;top:139.2px;font-size:10px;color:#1c1c1c;transform:scaleX(0.816);font-family:'Liberation Serif',serif;">one</span><span class="t" style="left:820.3px;top:138.7px;font-size:9px;color:#1d4f8f;transform:scaleX(0.911);font-family:'Liberation Serif',serif;">^iT^^l'8</span><span class="t" style="left:855px;top:139.5px;font-size:9px;color:#1d4f8f;transform:scaleX(1.181);font-family:'Liberation Serif',serif;">^</span><span class="t" style="left:632px;top:150.3px;font-size:10px;color:#1c1c1c;transform:scaleX(0.829);font-family:'Liberation Serif',serif;">study,</span><span class="t" style="left:659.6px;top:150.3px;font-size:10px;color:#1c1c1c;transform:scaleX(0.790);font-family:'Liberation Serif',serif;">“Family</span><span class="t" style="left:693px;top:150.3px;font-size:10px;color:#1c1c1c;transform:scaleX(0.833);font-family:'Liberation Serif',serif;">Caregiving</span><span class="t" style="left:737.7px;top:150.3px;font-size:10px;color:#1c1c1c;word-spacing:7.45px;transform:scaleX(0.8);font-family:'Liberation Serif',serif;">and All-Cause Mortality</span><span class="t" style="left:834.5px;top:150.8px;font-size:9px;color:#1d4f8f;transform:scaleX(0.945);font-family:'Liberation Serif',serif;">^</span><span class="t" style="left:846.5px;top:149.3px;font-size:5.5px;color:#1d3f8f;transform:scaleX(1.238);font-family:'Liberation Serif',serif;">titled</span><span class="t" style="left:631.5px;top:161.8px;font-size:10px;color:#1c1c1c;word-spacing:8.23px;transform:scaleX(0.8);font-family:'Liberation Serif',serif;">Population-Based Propensity-Matched Analysis</span><span class="t" style="left:804px;top:162.3px;font-size:9px;color:#1d4f8f;transform:scaleX(0.945);font-family:'Liberation Serif',serif;">^</span><span class="t" style="left:811.9px;top:161.8px;font-size:10px;color:#1c1c1c;transform:scaleX(0.758);font-family:'Liberation Serif',serif;">re</span><span class="t" style="left:823.3px;top:162.3px;font-size:9px;color:#1d4f8f;transform:scaleX(0.921);font-family:'Liberation Serif',serif;">^</span><span class="t" style="left:832px;top:162.3px;font-size:9px;color:#1d4f8f;transform:scaleX(1.265);font-family:'Liberation Serif',serif;">"^</span><span class="t" style="left:847px;top:162.3px;font-size:9px;color:#1d4f8f;transform:scaleX(1.337);font-family:'Liberation Serif',serif;">^ a</span><span class="t" style="left:631.5px;top:173.3px;font-size:10px;color:#1c1c1c;word-spacing:6.30px;transform:scaleX(0.8);font-family:'Liberation Serif',serif;">that mortality rates for caregivers were 18 percent</span><span class="t" style="left:831px;top:173.3px;font-size:9.5px;color:#1d3f8f;transform:scaleX(0.869);font-family:'Liberation Serif',serif;">lo^^8</span><span class="t" style="left:855px;top:173.8px;font-size:9px;color:#1d4f8f;transform:scaleX(1.181);font-family:'Liberation Serif',serif;">^</span><span class="t" style="left:630.7px;top:184.7px;font-size:10px;color:#1c1c1c;word-spacing:7.28px;transform:scaleX(0.8);font-family:'Liberation Serif',serif;">non-caregivers in similar demographic groups</span><span class="t" style="left:802px;top:184.7px;font-size:9.5px;color:#1d4f8f;transform:scaleX(0.803);font-family:'Liberation Serif',serif;">?«</span><span class="t" style="left:815.9px;top:184.7px;font-size:10px;color:#1c1c1c;transform:scaleX(0.795);font-family:'Liberation Serif',serif;">And</span><span class="t" style="left:832.5px;top:184.7px;font-size:10px;color:#1d3f8f;transform:scaleX(1.076);font-family:'Liberation Serif',serif;">Ta"</span><span class="t" style="left:855px;top:185.2px;font-size:9px;color:#1d4f8f;transform:scaleX(1.181);font-family:'Liberation Serif',serif;">^</span><span class="t" style="left:630.3px;top:199.5px;font-size:8px;color:#1d6fb0;transform:scaleX(0.951);font-family:'Liberation Serif',serif;">w</span><span class="t" style="left:636px;top:196.6px;font-size:10px;color:#1c1c1c;word-spacing:3.46px;transform:scaleX(0.8);font-family:'Liberation Serif',serif;">ho spend time caring for their grandchildren appear</span><span class="t" style="left:824px;top:196.6px;font-size:10px;color:#1d3f8f;transform:scaleX(0.794);font-family:'Liberation Serif',serif;">toTx</span><svg style="left:824px;top:207.5px" width="16" height="2" viewBox="0 0 16 2" ><path d="M0 1.500l0.750 -1.5l0.750 1.5l0.750 -1.5l0.750 1.5l0.750 -1.5l0.750 1.5l0.750 -1.5l0.750 1.5l0.750 -1.5l0.750 1.5l0.750 -1.5l0.750 1.5l0.750 -1.5l0.750 1.5l0.750 -1.5l0.750 1.5l0.750 -1.5l0.750 1.5l0.750 -1.5l0.750 1.5" stroke="#e0393e" stroke-width="0.500" fill="none"/></svg><span class="t" style="left:845px;top:197px;font-size:9px;color:#1d4f8f;transform:scaleX(0.792);font-family:'Liberation Serif',serif;">^H</span><span class="t" style="left:853.8px;top:194.5px;font-size:6.5px;color:#1d3f8f;transform:scaleX(1.185);font-family:'Liberation Serif',serif;">18</span><span class="t" style="left:630px;top:208.4px;font-size:10px;color:#1c1c1c;word-spacing:3.10px;transform:scaleX(0.8);font-family:'Liberation Serif',serif;">similar benefits. The Berlin Aging Study found "mortality hoards</span><span class="t" style="left:629px;top:220.3px;font-size:10px;color:#1c1c1c;word-spacing:3.48px;transform:scaleX(0.8);font-family:'Liberation Serif',serif;">for grandparents who provided non-custodial childcare were 370/</span><svg style="left:736.5px;top:231.2px" width="48.5" height="2" viewBox="0 0 48.5 2" ><path d="M0 1.500l0.750 -1.5l0.750 1.5l0.750 -1.5l0.750 1.5l0.750 -1.5l0.750 1.5l0.750 -1.5l0.750 1.5l0.750 -1.5l0.750 1.5l0.750 -1.5l0.750 1.5l0.750 -1.5l0.750 1.5l0.750 -1.5l0.750 1.5l0.750 -1.5l0.750 1.5l0.750 -1.5l0.750 1.5l0.750 -1.5l0.750 1.5l0.750 -1.5l0.750 1.5l0.750 -1.5l0.750 1.5l0.750 -1.5l0.750 1.5l0.750 -1.5l0.750 1.5l0.750 -1.5l0.750 1.5l0.750 -1.5l0.750 1.5l0.750 -1.5l0.750 1.5l0.750 -1.5l0.750 1.5l0.750 -1.5l0.750 1.5l0.750 -1.5l0.750 1.5l0.750 -1.5l0.750 1.5l0.750 -1.5l0.750 1.5l0.750 -1.5l0.750 1.5l0.750 -1.5l0.750 1.5l0.750 -1.5l0.750 1.5l0.750 -1.5l0.750 1.5l0.750 -1.5l0.750 1.5l0.750 -1.5l0.750 1.5l0.750 -1.5l0.750 1.5l0.750 -1.5l0.750 1.5l0.750 -1.5l0.750 1.5" stroke="#e0393e" stroke-width="0.500" fill="none"/></svg><span class="t" style="left:628.5px;top:231.9px;font-size:10px;color:#1c1c1c;word-spacing:2.31px;transform:scaleX(0.8);font-family:'Liberation Serif',serif;">lower than for grandparents who did not provide childcare and for</span><span class="t" style="left:627.8px;top:243.6px;font-size:10px;color:#1c1c1c;word-spacing:2.38px;transform:scaleX(0.8);font-family:'Liberation Serif',serif;">non-grandparents.” And it wasn’t because they were healthier when</span><span class="t" style="left:627.8px;top:255.6px;font-size:10px;color:#1c1c1c;word-spacing:2.65px;transform:scaleX(0.8);font-family:'Liberation Serif',serif;">they began. The research controlled for physical health, age, socio-</span><span class="t" style="left:627.5px;top:267.4px;font-size:10px;color:#1c1c1c;word-spacing:4.91px;transform:scaleX(0.8);font-family:'Liberation Serif',serif;">economic status, and various characteristics of the children and</span><span class="t" style="left:627px;top:278.4px;font-size:10px;color:#1c1c1c;transform:scaleX(0.801);font-family:'Liberation Serif',serif;">grandchildren.</span><span class="t" style="left:674px;top:276.5px;font-size:7px;color:#1c1c1c;transform:scaleX(1.000);font-family:'Liberation Serif',serif;">21</span><span class="t" style="left:636px;top:291.7px;font-size:10px;color:#1c1c1c;word-spacing:1.65px;transform:scaleX(0.8);font-family:'Liberation Serif',serif;">Caring for others could also improve your strength. Here’s some¬</span><span class="t" style="left:625.6px;top:304px;font-size:10px;color:#1c1c1c;word-spacing:1.36px;transform:scaleX(0.8);font-family:'Liberation Serif',serif;">thing you could try with your children before a sports competition.</span><span class="t" style="left:624.8px;top:316.3px;font-size:10px;color:#1c1c1c;word-spacing:1.42px;transform:scaleX(0.8);font-family:'Liberation Serif',serif;">Give them an opportunity to do something kind before they compete.</span><span class="t" style="left:624.2px;top:329.5px;font-size:11px;color:#1c1c1c;word-spacing:-0.11px;transform:scaleX(0.8);font-family:'Liberation Serif',serif;">It might help them win.</span><span class="t" style="left:633.4px;top:342px;font-size:11px;color:#1c1c1c;word-spacing:0.28px;transform:scaleX(0.8);font-family:'Liberation Serif',serif;">Kurt Gray, a psychology professor at the University of Maryland,</span><span class="t" style="left:622.9px;top:355.2px;font-size:11px;color:#1c1c1c;word-spacing:0.22px;transform:scaleX(0.8);font-family:'Liberation Serif',serif;">led a team of researchers who asked people in a Boston subway sta¬</span><span class="t" style="left:622.5px;top:367.8px;font-size:11px;color:#1c1c1c;word-spacing:0.14px;transform:scaleX(0.8);font-family:'Liberation Serif',serif;">tion if they wanted to conduct a strength experiment with a 5-pound</span><span class="t" style="left:621px;top:381.3px;font-size:11px;color:#1c1c1c;word-spacing:0.26px;transform:scaleX(0.8);font-family:'Liberation Serif',serif;">(2.3-kilogram) weight. Subjects held the weight away from their bod¬</span><span class="t" style="left:620.6px;top:394.4px;font-size:11px;color:#1c1c1c;word-spacing:0.27px;transform:scaleX(0.8);font-family:'Liberation Serif',serif;">ies with a fully extended arm. The researchers asked them to hold it</span></div></div>
<svg style="left:120px;top:105px" width="220" height="304" viewBox="120 105 220 304"><defs><filter id="blr" x="-2%" y="-2%" width="104%" height="104%"><feGaussianBlur stdDeviation="0.35"/></filter></defs><rect x="122.5" y="107" width="213.5" height="300" fill="#fff"/><rect x="122.5" y="406.600" width="213.5" height="1" fill="#c9ccd0"/><rect x="121.800" y="107" width="1.200" height="300.600" fill="#b9bcc1"/><g filter="url(#blr)"><defs><linearGradient id="mpap" x1="0" y1="0" x2="0" y2="1"><stop offset="0" stop-color="#d6d0c8"/><stop offset="1" stop-color="#b4aea5"/></linearGradient><linearGradient id="mlp" x1="0" y1="0" x2="0" y2="1"><stop offset="0" stop-color="#e4dcd1"/><stop offset="0.26" stop-color="#ddd5ca"/><stop offset="0.575" stop-color="#d1c5b4"/><stop offset="0.83" stop-color="#c0b4a0"/><stop offset="1" stop-color="#b8ab96"/></linearGradient><linearGradient id="mgut" x1="0" y1="0" x2="0" y2="1"><stop offset="0" stop-color="#cbb897"/><stop offset="0.26" stop-color="#b3a68c"/><stop offset="0.575" stop-color="#9c8f73"/><stop offset="0.83" stop-color="#8b7b61"/><stop offset="1" stop-color="#827359"/></linearGradient><linearGradient id="mrm" x1="0" y1="0" x2="0" y2="1"><stop offset="0" stop-color="#ddd6cb"/><stop offset="0.16" stop-color="#d9d1c6"/><stop offset="0.83" stop-color="#c7b9a8"/><stop offset="1" stop-color="#bdb09d"/></linearGradient><linearGradient id="mrs" x1="0" y1="0" x2="0" y2="1"><stop offset="0" stop-color="#d0c2a3"/><stop offset="0.35" stop-color="#d6cdc0"/><stop offset="0.83" stop-color="#c5beb4"/><stop offset="1" stop-color="#bbb2a4"/></linearGradient><linearGradient id="mb1" x1="0" y1="0" x2="1" y2="0"><stop offset="0" stop-color="#8f9ab6"/><stop offset="1" stop-color="#a9b3cd"/></linearGradient><linearGradient id="mb2" x1="0" y1="0" x2="1" y2="0"><stop offset="0" stop-color="#6e7488"/><stop offset="0.1" stop-color="#878ca0"/><stop offset="0.4" stop-color="#9a9ead"/><stop offset="1" stop-color="#b2b7c4"/></linearGradient></defs><rect x="122.5" y="116.5" width="213.2" height="280.8" fill="url(#mpap)"/><polygon points="122.5,116.5 147.3,116.5 132.8,397.3 122.5,397.3" fill="url(#mlp)"/><polygon points="147.3,116.5 156,116.5 156,293 151,293 151,397.3 132.8,397.3" fill="url(#mgut)"/><rect x="151" y="388" width="185" height="9.3" fill="#a3977f"/><rect x="311" y="116.5" width="24.7" height="280.8" fill="url(#mrm)"/><polygon points="328.8,116.5 335.7,116.5 335.7,397.3 333.4,397.3 332.2,180" fill="url(#mrs)"/><rect x="155" y="119" width="156" height="173.4" fill="url(#mb1)"/><rect x="150.4" y="292.4" width="162.9" height="96.6" fill="url(#mb2)"/><rect x="334.700" y="116.500" width="1" height="280.800" fill="#b5b5b5"/><g font-family="'Liberation Serif',serif" fill="#35322d" stroke="#35322d" stroke-width="0.08"><text x="0" y="0" font-size="6.3" dominant-baseline="central" transform="translate(135.8 116.8) rotate(45) scale(0.76 1)">y and</text><text x="0" y="0" font-size="6.3" dominant-baseline="central" transform="translate(123.6 116.6) rotate(37) scale(0.76 1)">s & College</text><text x="0" y="0" font-size="6.3" dominant-baseline="central" transform="translate(123 124.6) rotate(37) scale(0.76 1)">s.</text><text x="0" y="0" font-size="6.3" dominant-baseline="central" transform="translate(122.6 132) rotate(36) scale(0.76 1)">tress. Too</text><text x="0" y="0" font-size="6.3" dominant-baseline="central" transform="translate(122.6 140.3) rotate(36) scale(0.76 1)">ealth, a</text><text x="0" y="0" font-size="6.3" dominant-baseline="central" transform="translate(122.6 149.5) rotate(34) scale(0.76 1)">anchers</text><text x="0" y="0" font-size="6.3" dominant-baseline="central" transform="translate(122.6 157.2) rotate(34) scale(0.76 1)">er three</text><text x="0" y="0" font-size="6.3" dominant-baseline="central" transform="translate(122.6 165.4) rotate(34) scale(0.76 1)">indness.</text><text x="0" y="0" font-size="6.3" dominant-baseline="central" transform="translate(122.6 174.5) rotate(33) scale(0.76 1)">acious</text><text x="0" y="0" font-size="6.3" dominant-baseline="central" transform="translate(123 200) rotate(33) scale(0.76 1)">the</text><text x="0" y="0" font-size="6.3" dominant-baseline="central" transform="translate(123 209.7) rotate(33) scale(0.76 1)">he</text><text x="0" y="0" font-size="6.3" dominant-baseline="central" transform="translate(123 217.5) rotate(33) scale(0.76 1)">e,</text><text x="0" y="0" font-size="6.3" dominant-baseline="central" transform="translate(123 225.9) rotate(33) scale(0.76 1)">t-</text><text x="0" y="0" font-size="6.5" dominant-baseline="central" transform="translate(123.5 260.4) rotate(30) scale(0.76 1)">be</text><text x="0" y="0" font-size="6.5" dominant-baseline="central" transform="translate(123.5 269.5) rotate(30) scale(0.76 1)">ie</text><text x="0" y="0" font-size="6.5" dominant-baseline="central" transform="translate(123.5 278.6) rotate(30) scale(0.76 1)">n-</text><text x="0" y="0" font-size="6.5" dominant-baseline="central" transform="translate(123.5 295) rotate(30) scale(0.76 1)">.</text></g><path id="mhd" d="M265 123Q286 124.200 303.500 130.400" fill="none"/><text font-family="'Liberation Serif',serif" font-style="italic" font-size="4.8" fill="#3d4668"><textPath href="#mhd" textLength="38.5" lengthAdjust="spacingAndGlyphs">Your Real Superpower</textPath></text><text x="305.8" y="131.8" font-family="'Liberation Serif',serif" font-size="4.6" fill="#3d4668" transform="rotate(12 305.8 131.8)">53</text><g font-family="'Liberation Serif',serif" fill="#27304f" stroke="#27304f" stroke-width="0.13" opacity="1"><path id="ml0" stroke="none" d="M168.1 135.4Q222.9 130.3 303.0 142.5" fill="none"/><text font-size="5.13" textLength="135.4" lengthAdjust="spacingAndGlyphs"><textPath href="#ml0" textLength="135.4" lengthAdjust="spacingAndGlyphs">Some might point to a 1999 study on mortality rates among</textPath></text><path id="ml1" stroke="none" d="M161.7 142.4Q218.3 136.6 303.1 148.9" fill="none"/><text font-size="5.19" textLength="141.9" lengthAdjust="spacingAndGlyphs"><textPath href="#ml1" textLength="141.9" lengthAdjust="spacingAndGlyphs">elderly people who looked after their disabled spouses and argue</textPath></text><path id="ml2" stroke="none" d="M161.4 148.9Q218.1 143.6 303.2 155.4" fill="none"/><text font-size="5.25" textLength="142.3" lengthAdjust="spacingAndGlyphs"><textPath href="#ml2" textLength="142.3" lengthAdjust="spacingAndGlyphs">that kindness and helping others won’t extend your life. But one of</textPath></text><path id="ml3" stroke="none" d="M161.1 155.5Q218.0 150.7 303.4 162.0" fill="none"/><text font-size="5.31" textLength="142.7" lengthAdjust="spacingAndGlyphs"><textPath href="#ml3" textLength="142.7" lengthAdjust="spacingAndGlyphs">that study’s original researchers told Marta Zaraska that they only</textPath></text><path id="ml4" stroke="none" d="M160.8 162.1Q189.3 160.0 225.0 161.6" fill="none"/><text font-size="5.38" textLength="64.3" lengthAdjust="spacingAndGlyphs"><textPath href="#ml4" textLength="64.3" lengthAdjust="spacingAndGlyphs">studied the very old and frail.19</textPath></text><path id="ml5" stroke="none" d="M166.1 168.6Q221.9 165.6 303.6 175.2" fill="none"/><text font-size="5.44" textLength="137.9" lengthAdjust="spacingAndGlyphs"><textPath href="#ml5" textLength="137.9" lengthAdjust="spacingAndGlyphs">Zaraska’s book references several large studies confirming that</textPath></text><path id="ml6" stroke="none" d="M160.1 175.8Q217.6 172.4 303.8 181.9" fill="none"/><text font-size="5.50" textLength="144.0" lengthAdjust="spacingAndGlyphs"><textPath href="#ml6" textLength="144.0" lengthAdjust="spacingAndGlyphs">caring for others helps us live longer. In one such briefly titled</textPath></text><path id="ml7" stroke="none" d="M159.8 182.7Q217.5 179.7 304.0 188.7" fill="none"/><text font-size="5.56" textLength="144.4" lengthAdjust="spacingAndGlyphs"><textPath href="#ml7" textLength="144.4" lengthAdjust="spacingAndGlyphs">study, “Family Caregiving and All-Cause Mortality: Findings from a</textPath></text><path id="ml8" stroke="none" d="M159.5 189.7Q217.4 187.2 304.2 195.6" fill="none"/><text font-size="5.62" textLength="144.9" lengthAdjust="spacingAndGlyphs"><textPath href="#ml8" textLength="144.9" lengthAdjust="spacingAndGlyphs">Population-Based Propensity-Matched Analysis,” researchers found</textPath></text><path id="ml9" stroke="none" d="M159.2 196.9Q217.3 194.6 304.4 202.5" fill="none"/><text font-size="5.69" textLength="145.4" lengthAdjust="spacingAndGlyphs"><textPath href="#ml9" textLength="145.4" lengthAdjust="spacingAndGlyphs">that mortality rates for caregivers were 18 percent lower than for</textPath></text><path id="ml10" stroke="none" d="M158.9 204.1Q217.2 202.2 304.6 209.4" fill="none"/><text font-size="5.75" textLength="145.9" lengthAdjust="spacingAndGlyphs"><textPath href="#ml10" textLength="145.9" lengthAdjust="spacingAndGlyphs">non-caregivers in similar demographic groups.20 And grandparents</textPath></text><path id="ml11" stroke="none" d="M158.6 211.4Q217.1 209.8 304.8 216.5" fill="none"/><text font-size="5.81" textLength="146.4" lengthAdjust="spacingAndGlyphs"><textPath href="#ml11" textLength="146.4" lengthAdjust="spacingAndGlyphs">who spend time caring for their grandchildren appear to experience</textPath></text><path id="ml12" stroke="none" d="M158.3 218.8Q217.0 217.6 305.1 223.6" fill="none"/><text font-size="5.87" textLength="146.9" lengthAdjust="spacingAndGlyphs"><textPath href="#ml12" textLength="146.9" lengthAdjust="spacingAndGlyphs">similar benefits. The Berlin Aging Study found “mortality hazards</textPath></text><path id="ml13" stroke="none" d="M158.0 226.3Q216.9 225.3 305.3 230.7" fill="none"/><text font-size="5.93" textLength="147.4" lengthAdjust="spacingAndGlyphs"><textPath href="#ml13" textLength="147.4" lengthAdjust="spacingAndGlyphs">for grandparents who provided non-custodial childcare were 37%</textPath></text><path id="ml14" stroke="none" d="M157.7 233.9Q216.8 233.2 305.6 237.9" fill="none"/><text font-size="5.99" textLength="148.0" lengthAdjust="spacingAndGlyphs"><textPath href="#ml14" textLength="148.0" lengthAdjust="spacingAndGlyphs">lower than for grandparents who did not provide childcare and for</textPath></text><path id="ml15" stroke="none" d="M157.3 241.6Q216.8 241.1 305.9 245.2" fill="none"/><text font-size="6.06" textLength="148.6" lengthAdjust="spacingAndGlyphs"><textPath href="#ml15" textLength="148.6" lengthAdjust="spacingAndGlyphs">non-grandparents.” And it wasn’t because they were healthier when</textPath></text><path id="ml16" stroke="none" d="M157.0 249.3Q216.7 249.0 306.1 252.5" fill="none"/><text font-size="6.12" textLength="149.1" lengthAdjust="spacingAndGlyphs"><textPath href="#ml16" textLength="149.1" lengthAdjust="spacingAndGlyphs">they began. The research controlled for physical health, age, socio-</textPath></text><path id="ml17" stroke="none" d="M156.7 257.2Q216.6 257.1 306.4 259.9" fill="none"/><text font-size="6.18" textLength="149.7" lengthAdjust="spacingAndGlyphs"><textPath href="#ml17" textLength="149.7" lengthAdjust="spacingAndGlyphs">economic status, and various characteristics of the children and</textPath></text><path id="ml18" stroke="none" d="M156.4 265.2Q171.8 265.2 189.0 265.3" fill="none"/><text font-size="6.24" textLength="32.6" lengthAdjust="spacingAndGlyphs"><textPath href="#ml18" textLength="32.6" lengthAdjust="spacingAndGlyphs">grandchildren.21</textPath></text><path id="ml19" stroke="none" d="M161.8 273.2Q220.7 273.5 307.1 274.9" fill="none"/><text font-size="6.30" textLength="145.3" lengthAdjust="spacingAndGlyphs"><textPath href="#ml19" textLength="145.3" lengthAdjust="spacingAndGlyphs">Caring for others could also improve your strength. Here’s some-</textPath></text><path id="ml20" stroke="none" d="M155.8 281.3Q216.4 281.6 307.4 282.4" fill="none"/><text font-size="6.37" textLength="151.6" lengthAdjust="spacingAndGlyphs"><textPath href="#ml20" textLength="151.6" lengthAdjust="spacingAndGlyphs">thing you could try with your children before a sports competition.</textPath></text><path id="ml21" stroke="none" d="M155.5 289.6Q216.4 290.0 307.7 290.0" fill="none"/><text font-size="6.43" textLength="152.3" lengthAdjust="spacingAndGlyphs"><textPath href="#ml21" textLength="152.3" lengthAdjust="spacingAndGlyphs">Give them an opportunity to do something kind before they compete.</textPath></text><path id="ml22" stroke="none" d="M155.2 297.9Q177.2 298.1 203.2 298.1" fill="none"/><text font-size="6.49" textLength="48.0" lengthAdjust="spacingAndGlyphs"><textPath href="#ml22" textLength="48.0" lengthAdjust="spacingAndGlyphs">It might help them win.</textPath></text><path id="ml23" stroke="none" d="M160.5 306.3Q220.5 306.7 308.5 305.5" fill="none"/><text font-size="6.55" textLength="147.9" lengthAdjust="spacingAndGlyphs"><textPath href="#ml23" textLength="147.9" lengthAdjust="spacingAndGlyphs">Kurt Gray, a psychology professor at the University of Maryland,</textPath></text><path id="ml24" stroke="none" d="M154.6 314.8Q216.3 315.3 308.9 313.3" fill="none"/><text font-size="6.61" textLength="154.3" lengthAdjust="spacingAndGlyphs"><textPath href="#ml24" textLength="154.3" lengthAdjust="spacingAndGlyphs">led a team of researchers who asked people in a Boston subway sta-</textPath></text><path id="ml25" stroke="none" d="M154.2 323.4Q216.2 323.9 309.2 321.2" fill="none"/><text font-size="6.68" textLength="155.0" lengthAdjust="spacingAndGlyphs"><textPath href="#ml25" textLength="155.0" lengthAdjust="spacingAndGlyphs">tion if they wanted to conduct a strength experiment with a 5-pound</textPath></text><path id="ml26" stroke="none" d="M153.9 332.1Q216.2 332.6 309.7 329.1" fill="none"/><text font-size="6.74" textLength="155.8" lengthAdjust="spacingAndGlyphs"><textPath href="#ml26" textLength="155.8" lengthAdjust="spacingAndGlyphs">(2.3-kilogram) weight. Subjects held the weight away from their bod-</textPath></text><path id="ml27" stroke="none" d="M153.6 340.8Q216.2 341.3 310.1 337.1" fill="none"/><text font-size="6.80" textLength="156.5" lengthAdjust="spacingAndGlyphs"><textPath href="#ml27" textLength="156.5" lengthAdjust="spacingAndGlyphs">ies with a fully extended arm. The researchers asked them to hold it</textPath></text><path id="ml28" stroke="none" d="M153.3 349.7Q216.2 350.1 310.5 345.1" fill="none"/><text font-size="6.86" textLength="157.3" lengthAdjust="spacingAndGlyphs"><textPath href="#ml28" textLength="157.3" lengthAdjust="spacingAndGlyphs">there as long as possible. After testing the subjects’ muscular endur-</textPath></text><path id="ml29" stroke="none" d="M153.0 358.7Q216.2 359.0 310.9 353.2" fill="none"/><text font-size="6.92" textLength="158.1" lengthAdjust="spacingAndGlyphs"><textPath href="#ml29" textLength="158.1" lengthAdjust="spacingAndGlyphs">ance, they let the subjects rest. Then they gave them a dollar for their</textPath></text><path id="ml30" stroke="none" d="M152.7 367.7Q216.2 367.9 311.4 361.4" fill="none"/><text font-size="6.98" textLength="158.9" lengthAdjust="spacingAndGlyphs"><textPath href="#ml30" textLength="158.9" lengthAdjust="spacingAndGlyphs">help. But while doing so, they asked the subjects if they wanted to</textPath></text><path id="ml31" stroke="none" d="M152.4 376.9Q216.2 376.9 311.9 369.6" fill="none"/><text font-size="7.05" textLength="159.7" lengthAdjust="spacingAndGlyphs"><textPath href="#ml31" textLength="159.7" lengthAdjust="spacingAndGlyphs">donate that dollar to UNICEF or keep it for themselves. Then they</textPath></text><path id="ml32" stroke="none" d="M152.1 386.1Q216.2 386.0 312.3 377.9" fill="none"/><text font-size="7.11" textLength="160.5" lengthAdjust="spacingAndGlyphs"><textPath href="#ml32" textLength="160.5" lengthAdjust="spacingAndGlyphs">tested their strength again. Those who donated the money were able</textPath></text></g><rect x="150.4" y="292.4" width="162.9" height="96.6" fill="none" stroke="#6485c6" stroke-width="1.100"/><rect x="155" y="119" width="156" height="173.4" fill="none" stroke="#1d56c4" stroke-width="1.800"/><rect x="152.40" y="116.40" width="5.20" height="5.20" rx="0.60" fill="#1d56c4"/><rect x="308.40" y="116.40" width="5.20" height="5.20" rx="0.60" fill="#1d56c4"/><rect x="152.40" y="289.80" width="5.20" height="5.20" rx="0.60" fill="#1d56c4"/><rect x="308.40" y="289.80" width="5.20" height="5.20" rx="0.60" fill="#1d56c4"/></g><rect x="123" y="107.400" width="212.300" height="40.200" fill="none" stroke="#fff" stroke-width="1"/><rect x="123" y="107.400" width="212.300" height="40.200" fill="none" stroke="#3b3fb8" stroke-width="1" stroke-dasharray="1.300 1.300"/><circle cx="126.300" cy="110.600" r="2.800" fill="#fff" stroke="#777" stroke-width="0.800"/><path d="M128.300 112.800l2.800 3.200" stroke="#666" stroke-width="1.300" stroke-linecap="round"/></svg>
<div class="abs" style="left:119.5px;top:104px;width:451px;height:1px;background:#dfe3e8"></div>
<div class="abs" style="left:558.3px;top:105px;width:12px;height:304.5px;background:#f0f3f6"></div>
<svg style="left:562px;top:108px" width="5" height="4" viewBox="0 0 5 4" ><path d="M2.500 0.300l2.300 3.400h-4.600z" fill="#8d9095"/></svg>
<svg style="left:562px;top:401px" width="5" height="4" viewBox="0 0 5 4" ><path d="M2.500 3.700l2.300-3.400h-4.600z" fill="#8d9095"/></svg>
<div class="sep" style="left:1008.7px;top:104.5px;height:411.5px;background:#dfe3e8"></div>
<div class="abs" style="left:1013.7px;top:155.5px;width:2.6px;height:183px;background:#8b8e93;border-radius:1.300px"></div>
<div class="abs" style="left:119.5px;top:436.5px;width:901px;height:1px;background:#e3e6ea"></div>
<div class="abs" style="left:119.5px;top:516.2px;width:901px;height:1px;background:#e3e6ea"></div>
<div class="abs" style="left:1013.7px;top:448px;width:2.6px;height:10.8px;background:#8b8e93;border-radius:1.300px"></div>
<svg style="left:393.7px;top:418.5px" width="10" height="9" viewBox="0 0 10 9" ><rect x="0.600" y="0.500" width="2.800" height="2.800" rx="0.600" class="ic" stroke-width="0.700"/><rect x="0.600" y="5.300" width="2.800" height="2.800" rx="0.600" class="ic" stroke-width="0.700"/><path d="M5.400 1.900h4M5.400 6.700h4" class="ic" stroke-width="0.700"/></svg>
<svg style="left:417.5px;top:420px" width="10" height="6" viewBox="0 0 10 6" ><path d="M0.600 3h8.800M2.500 1l-2 2 2 2M7.500 1l2 2-2 2" class="ic" stroke-width="0.700"/></svg>
<svg style="left:442.5px;top:418px" width="6" height="10" viewBox="0 0 6 10" ><path d="M3 0.600v8.800M1 2.500l2-2 2 2M1 7.500l2 2 2-2" class="ic" stroke-width="0.700"/></svg>
<div class="abs" style="left:461.7px;top:415.5px;width:15px;height:15px;background:#d6e3f7;border-radius:3px"></div>
<svg style="left:464.7px;top:418.5px" width="9" height="9" viewBox="0 0 9 9" ><path d="M0.700 0.700l7.600 7.600M8.300 0.700l-7.600 7.600M0.700 3v-2.300h2.300M6 0.700h2.300v2.300M8.300 6v2.300h-2.300M3 8.300h-2.300v-2.300" class="ic" style="stroke:#2b57c6" stroke-width="0.700"/></svg>
<div class="abs" style="left:484.2px;top:415.5px;width:36.3px;height:15px;border:1px solid #c4c8ce;border-radius:1.500px;background:#fff"></div><span class="t" style="left:486.7px;top:417.7px;font-size:8.8px;color:#222;transform:scaleX(0.869);">64%</span><svg style="left:511.7px;top:421.5px" width="6" height="4" viewBox="0 0 6 4" ><path d="M0.400 0.500l2.400 2.400 2.400-2.400" class="ic" stroke-width="0.700"/></svg>
<svg style="left:531.5px;top:422.5px" width="7" height="1" viewBox="0 0 7 1" ><path d="M0 0.500h7" stroke="#777b82" stroke-width="0.800"/></svg>
<svg style="left:554.7px;top:419.5px" width="7" height="7" viewBox="0 0 7 7" ><path d="M0 3.500h7M3.500 0v7" stroke="#62676f" stroke-width="0.800"/></svg>
<svg style="left:797px;top:418.5px" width="10" height="9" viewBox="0 0 10 9" ><rect x="0.600" y="0.500" width="2.800" height="2.800" rx="0.600" class="ic" stroke-width="0.700"/><rect x="0.600" y="5.300" width="2.800" height="2.800" rx="0.600" class="ic" stroke-width="0.700"/><path d="M5.400 1.900h4M5.400 6.700h4" class="ic" stroke-width="0.700"/></svg>
<div class="abs" style="left:818.7px;top:415.5px;width:15px;height:15px;background:#d6e3f7;border-radius:3px"></div>
<span class="t" style="left:821.5px;top:416.5px;font-size:10px;color:#2b57c6;transform:scaleX(1.011);">æ</span>
<svg style="left:821.5px;top:427px" width="9" height="2" viewBox="0 0 9 2" ><path d="M0 1q1.100-1.400 2.250 0t2.250 0 2.250 0 2.250 0" stroke="#2b57c6" stroke-width="0.600" fill="none"/></svg>
<span class="t" style="left:846px;top:417.5px;font-size:10px;color:#62676f;transform:scaleX(1.116);">¶</span>
<svg style="left:867.5px;top:420px" width="10" height="6" viewBox="0 0 10 6" ><path d="M0.600 3h8.800M2.500 1l-2 2 2 2M7.500 1l2 2-2 2" class="ic" stroke-width="0.700"/></svg>
<svg style="left:892.5px;top:418px" width="6" height="10" viewBox="0 0 6 10" ><path d="M3 0.600v8.800M1 2.500l2-2 2 2M1 7.500l2 2 2-2" class="ic" stroke-width="0.700"/></svg>
<svg style="left:915px;top:418.5px" width="9" height="9" viewBox="0 0 9 9" ><path d="M0.700 0.700l7.600 7.600M8.300 0.700l-7.600 7.600M0.700 3v-2.300h2.300M6 0.700h2.300v2.300M8.300 6v2.300h-2.300M3 8.300h-2.300v-2.300" class="ic" stroke-width="0.700"/></svg>
<div class="abs" style="left:934.5px;top:415.5px;width:36.2px;height:15px;border:1px solid #c4c8ce;border-radius:1.500px;background:#fff"></div><span class="t" style="left:937.5px;top:417.7px;font-size:8.8px;color:#222;transform:scaleX(0.822);">100%</span><svg style="left:962.2px;top:421.5px" width="6" height="4" viewBox="0 0 6 4" ><path d="M0.400 0.500l2.400 2.400 2.400-2.400" class="ic" stroke-width="0.700"/></svg>
<svg style="left:981.5px;top:422.5px" width="7" height="1" viewBox="0 0 7 1" ><path d="M0 0.500h7" stroke="#777b82" stroke-width="0.800"/></svg>
<svg style="left:1004.5px;top:419.5px" width="7" height="7" viewBox="0 0 7 7" ><path d="M0 3.500h7M3.500 0v7" stroke="#62676f" stroke-width="0.800"/></svg>
<svg style="left:8.5px;top:524.5px" width="9" height="9" viewBox="0 0 9 9" ><path d="M4.500 0.800l3.900 7.200h-7.800z" class="ic" stroke-width="0.800"/><path d="M4.500 3.400v2.300" class="ic" stroke-width="0.800"/><circle cx="4.500" cy="6.900" r="0.400" fill="#4d525a"/></svg>
<div class="abs" style="left:38.5px;top:535.4px;width:66px;height:1.7px;background:#707379;border-radius:0.800px"></div>
<div class="abs" style="left:123.7px;top:521px;width:60px;height:16px;background:#d6e3f7;border-radius:3px"></div>
<svg style="left:126.5px;top:525px" width="9" height="9" viewBox="0 0 9 9" ><circle cx="3.800" cy="3.800" r="3.200" stroke="#2b57c6" stroke-width="0.800" fill="none"/><path d="M6.200 6.200l2.400 2.400M2.300 3.800h3M3.800 2.300v3" stroke="#2b57c6" stroke-width="0.800" fill="none" stroke-linecap="round"/></svg>
<span class="t" style="left:140px;top:523.7px;font-size:8.8px;color:#2b57c6;transform:scaleX(0.868);">Zoom Pane</span>
<svg style="left:915px;top:524.7px" width="9" height="9" viewBox="0 0 9 9" ><rect x="0.500" y="0.500" width="8" height="8" fill="none" stroke="#62676f" stroke-width="0.800" stroke-dasharray="1 1"/><circle cx="4.500" cy="5.500" r="0.500" fill="#62676f"/></svg>
<div class="abs" style="left:934.5px;top:522px;width:36.2px;height:14.2px;border:1px solid #c4c8ce;border-radius:1.500px;background:#fff"></div><span class="t" style="left:937.5px;top:523.8px;font-size:8.8px;color:#222;transform:scaleX(0.822);">125%</span><svg style="left:962.2px;top:527.6px" width="6" height="4" viewBox="0 0 6 4" ><path d="M0.400 0.500l2.400 2.400 2.400-2.400" class="ic" stroke-width="0.700"/></svg>
<svg style="left:981.5px;top:528.7px" width="7" height="1" viewBox="0 0 7 1" ><path d="M0 0.500h7" stroke="#777b82" stroke-width="0.800"/></svg>
<svg style="left:1004.5px;top:525.7px" width="7" height="7" viewBox="0 0 7 7" ><path d="M0 3.500h7M3.500 0v7" stroke="#62676f" stroke-width="0.800"/></svg>
<svg style="left:121px;top:436px" width="418" height="80.500" viewBox="121 436 418 80.500"><defs><clipPath id="zclip"><rect x="122.500" y="455" width="412" height="60.700"/></clipPath><filter id="blz" x="-2%" y="-2%" width="104%" height="104%"><feGaussianBlur stdDeviation="0.300"/></filter></defs><rect x="122.500" y="437" width="412" height="79" fill="#fff"/><rect x="122" y="436.200" width="416" height="2.500" fill="#bfc2c6"/><rect x="121.800" y="437" width="1.200" height="79" fill="#b9bcc1"/><rect x="534.500" y="437" width="3.500" height="79" fill="#a6a9ae"/><g clip-path="url(#zclip)"><g filter="url(#blz)"><g transform="translate(185 458.700) scale(1.953) translate(-155 -119)"><defs><linearGradient id="zpap" x1="0" y1="0" x2="1" y2="0"><stop offset="0" stop-color="#c9c3bb"/><stop offset="0.5" stop-color="#d6d0c8"/><stop offset="1" stop-color="#e0dad2"/></linearGradient><linearGradient id="zlp" x1="0" y1="0" x2="0" y2="1"><stop offset="0" stop-color="#ece6dc"/><stop offset="1" stop-color="#e6dfd3"/></linearGradient><linearGradient id="zgut" x1="0" y1="0" x2="0" y2="1"><stop offset="0" stop-color="#cfc4a8"/><stop offset="1" stop-color="#b9ae98"/></linearGradient><linearGradient id="zrm" x1="0" y1="0" x2="0" y2="1"><stop offset="0" stop-color="#dfd8cd"/><stop offset="1" stop-color="#d6ccbb"/></linearGradient><linearGradient id="zrs" x1="0" y1="0" x2="0" y2="1"><stop offset="0" stop-color="#d8c9a6"/><stop offset="1" stop-color="#d2c7b2"/></linearGradient><linearGradient id="zb1" x1="0" y1="0" x2="1" y2="0"><stop offset="0" stop-color="#8f9ab6"/><stop offset="1" stop-color="#a9b3cd"/></linearGradient><linearGradient id="zb2" x1="0" y1="0" x2="1" y2="0"><stop offset="0" stop-color="#6e7488"/><stop offset="0.1" stop-color="#878ca0"/><stop offset="0.4" stop-color="#9a9ead"/><stop offset="1" stop-color="#b2b7c4"/></linearGradient></defs><rect x="122.5" y="116.5" width="213.2" height="280.8" fill="url(#zpap)"/><polygon points="122.5,116.5 147.3,116.5 132.8,397.3 122.5,397.3" fill="url(#zlp)"/><polygon points="147.3,116.5 156,116.5 156,293 151,293 151,397.3 132.8,397.3" fill="url(#zgut)"/><rect x="151" y="388" width="185" height="9.3" fill="#a3977f"/><rect x="311" y="116.5" width="24.7" height="280.8" fill="url(#zrm)"/><polygon points="328.8,116.5 335.7,116.5 335.7,397.3 333.4,397.3 332.2,180" fill="url(#zrs)"/><g font-family="'Liberation Serif',serif" fill="#2b2a28" stroke="#2b2a28" stroke-width="0.08"><text x="0" y="0" font-size="6.3" dominant-baseline="central" transform="translate(135.8 116.8) rotate(45) scale(0.76 1)">y and</text><text x="0" y="0" font-size="6.3" dominant-baseline="central" transform="translate(123.6 116.6) rotate(37) scale(0.76 1)">s & College</text><text x="0" y="0" font-size="6.3" dominant-baseline="central" transform="translate(123 124.6) rotate(37) scale(0.76 1)">s.</text><text x="0" y="0" font-size="6.3" dominant-baseline="central" transform="translate(122.6 132) rotate(36) scale(0.76 1)">tress. Too</text><text x="0" y="0" font-size="6.3" dominant-baseline="central" transform="translate(122.6 140.3) rotate(36) scale(0.76 1)">ealth, a</text><text x="0" y="0" font-size="6.3" dominant-baseline="central" transform="translate(122.6 149.5) rotate(34) scale(0.76 1)">anchers</text><text x="0" y="0" font-size="6.3" dominant-baseline="central" transform="translate(122.6 157.2) rotate(34) scale(0.76 1)">er three</text><text x="0" y="0" font-size="6.3" dominant-baseline="central" transform="translate(122.6 165.4) rotate(34) scale(0.76 1)">indness.</text><text x="0" y="0" font-size="6.3" dominant-baseline="central" transform="translate(122.6 174.5) rotate(33) scale(0.76 1)">acious</text><text x="0" y="0" font-size="6.3" dominant-baseline="central" transform="translate(123 200) rotate(33) scale(0.76 1)">the</text><text x="0" y="0" font-size="6.3" dominant-baseline="central" transform="translate(123 209.7) rotate(33) scale(0.76 1)">he</text><text x="0" y="0" font-size="6.3" dominant-baseline="central" transform="translate(123 217.5) rotate(33) scale(0.76 1)">e,</text><text x="0" y="0" font-size="6.3" dominant-baseline="central" transform="translate(123 225.9) rotate(33) scale(0.76 1)">t-</text><text x="0" y="0" font-size="6.5" dominant-baseline="central" transform="translate(123.5 260.4) rotate(30) scale(0.76 1)">be</text><text x="0" y="0" font-size="6.5" dominant-baseline="central" transform="translate(123.5 269.5) rotate(30) scale(0.76 1)">ie</text><text x="0" y="0" font-size="6.5" dominant-baseline="central" transform="translate(123.5 278.6) rotate(30) scale(0.76 1)">n-</text><text x="0" y="0" font-size="6.5" dominant-baseline="central" transform="translate(123.5 295) rotate(30) scale(0.76 1)">.</text></g><path id="zhd" d="M265 123Q286 124.200 303.500 130.400" fill="none"/><text font-family="'Liberation Serif',serif" font-style="italic" font-size="4.8" fill="#3a3733"><textPath href="#zhd" textLength="38.5" lengthAdjust="spacingAndGlyphs">Your Real Superpower</textPath></text><text x="305.8" y="131.8" font-family="'Liberation Serif',serif" font-size="4.6" fill="#3a3733" transform="rotate(12 305.8 131.8)">53</text><g font-family="'Liberation Serif',serif" fill="#1f1e1c" stroke="#1f1e1c" stroke-width="0.13" opacity="1"><path id="zl0" stroke="none" d="M168.1 135.4Q222.9 130.3 303.0 142.5" fill="none"/><text font-size="5.13" textLength="135.4" lengthAdjust="spacingAndGlyphs"><textPath href="#zl0" textLength="135.4" lengthAdjust="spacingAndGlyphs">Some might point to a 1999 study on mortality rates among</textPath></text><path id="zl1" stroke="none" d="M161.7 142.4Q218.3 136.6 303.1 148.9" fill="none"/><text font-size="5.19" textLength="141.9" lengthAdjust="spacingAndGlyphs"><textPath href="#zl1" textLength="141.9" lengthAdjust="spacingAndGlyphs">elderly people who looked after their disabled spouses and argue</textPath></text><path id="zl2" stroke="none" d="M161.4 148.9Q218.1 143.6 303.2 155.4" fill="none"/><text font-size="5.25" textLength="142.3" lengthAdjust="spacingAndGlyphs"><textPath href="#zl2" textLength="142.3" lengthAdjust="spacingAndGlyphs">that kindness and helping others won’t extend your life. But one of</textPath></text><path id="zl3" stroke="none" d="M161.1 155.5Q218.0 150.7 303.4 162.0" fill="none"/><text font-size="5.31" textLength="142.7" lengthAdjust="spacingAndGlyphs"><textPath href="#zl3" textLength="142.7" lengthAdjust="spacingAndGlyphs">that study’s original researchers told Marta Zaraska that they only</textPath></text><path id="zl4" stroke="none" d="M160.8 162.1Q189.3 160.0 225.0 161.6" fill="none"/><text font-size="5.38" textLength="64.3" lengthAdjust="spacingAndGlyphs"><textPath href="#zl4" textLength="64.3" lengthAdjust="spacingAndGlyphs">studied the very old and frail.19</textPath></text><path id="zl5" stroke="none" d="M166.1 168.6Q221.9 165.6 303.6 175.2" fill="none"/><text font-size="5.44" textLength="137.9" lengthAdjust="spacingAndGlyphs"><textPath href="#zl5" textLength="137.9" lengthAdjust="spacingAndGlyphs">Zaraska’s book references several large studies confirming that</textPath></text><path id="zl6" stroke="none" d="M160.1 175.8Q217.6 172.4 303.8 181.9" fill="none"/><text font-size="5.50" textLength="144.0" lengthAdjust="spacingAndGlyphs"><textPath href="#zl6" textLength="144.0" lengthAdjust="spacingAndGlyphs">caring for others helps us live longer. In one such briefly titled</textPath></text><path id="zl7" stroke="none" d="M159.8 182.7Q217.5 179.7 304.0 188.7" fill="none"/><text font-size="5.56" textLength="144.4" lengthAdjust="spacingAndGlyphs"><textPath href="#zl7" textLength="144.4" lengthAdjust="spacingAndGlyphs">study, “Family Caregiving and All-Cause Mortality: Findings from a</textPath></text><path id="zl8" stroke="none" d="M159.5 189.7Q217.4 187.2 304.2 195.6" fill="none"/><text font-size="5.62" textLength="144.9" lengthAdjust="spacingAndGlyphs"><textPath href="#zl8" textLength="144.9" lengthAdjust="spacingAndGlyphs">Population-Based Propensity-Matched Analysis,” researchers found</textPath></text><path id="zl9" stroke="none" d="M159.2 196.9Q217.3 194.6 304.4 202.5" fill="none"/><text font-size="5.69" textLength="145.4" lengthAdjust="spacingAndGlyphs"><textPath href="#zl9" textLength="145.4" lengthAdjust="spacingAndGlyphs">that mortality rates for caregivers were 18 percent lower than for</textPath></text><path id="zl10" stroke="none" d="M158.9 204.1Q217.2 202.2 304.6 209.4" fill="none"/><text font-size="5.75" textLength="145.9" lengthAdjust="spacingAndGlyphs"><textPath href="#zl10" textLength="145.9" lengthAdjust="spacingAndGlyphs">non-caregivers in similar demographic groups.20 And grandparents</textPath></text><path id="zl11" stroke="none" d="M158.6 211.4Q217.1 209.8 304.8 216.5" fill="none"/><text font-size="5.81" textLength="146.4" lengthAdjust="spacingAndGlyphs"><textPath href="#zl11" textLength="146.4" lengthAdjust="spacingAndGlyphs">who spend time caring for their grandchildren appear to experience</textPath></text><path id="zl12" stroke="none" d="M158.3 218.8Q217.0 217.6 305.1 223.6" fill="none"/><text font-size="5.87" textLength="146.9" lengthAdjust="spacingAndGlyphs"><textPath href="#zl12" textLength="146.9" lengthAdjust="spacingAndGlyphs">similar benefits. The Berlin Aging Study found “mortality hazards</textPath></text><path id="zl13" stroke="none" d="M158.0 226.3Q216.9 225.3 305.3 230.7" fill="none"/><text font-size="5.93" textLength="147.4" lengthAdjust="spacingAndGlyphs"><textPath href="#zl13" textLength="147.4" lengthAdjust="spacingAndGlyphs">for grandparents who provided non-custodial childcare were 37%</textPath></text><path id="zl14" stroke="none" d="M157.7 233.9Q216.8 233.2 305.6 237.9" fill="none"/><text font-size="5.99" textLength="148.0" lengthAdjust="spacingAndGlyphs"><textPath href="#zl14" textLength="148.0" lengthAdjust="spacingAndGlyphs">lower than for grandparents who did not provide childcare and for</textPath></text><path id="zl15" stroke="none" d="M157.3 241.6Q216.8 241.1 305.9 245.2" fill="none"/><text font-size="6.06" textLength="148.6" lengthAdjust="spacingAndGlyphs"><textPath href="#zl15" textLength="148.6" lengthAdjust="spacingAndGlyphs">non-grandparents.” And it wasn’t because they were healthier when</textPath></text><path id="zl16" stroke="none" d="M157.0 249.3Q216.7 249.0 306.1 252.5" fill="none"/><text font-size="6.12" textLength="149.1" lengthAdjust="spacingAndGlyphs"><textPath href="#zl16" textLength="149.1" lengthAdjust="spacingAndGlyphs">they began. The research controlled for physical health, age, socio-</textPath></text><path id="zl17" stroke="none" d="M156.7 257.2Q216.6 257.1 306.4 259.9" fill="none"/><text font-size="6.18" textLength="149.7" lengthAdjust="spacingAndGlyphs"><textPath href="#zl17" textLength="149.7" lengthAdjust="spacingAndGlyphs">economic status, and various characteristics of the children and</textPath></text><path id="zl18" stroke="none" d="M156.4 265.2Q171.8 265.2 189.0 265.3" fill="none"/><text font-size="6.24" textLength="32.6" lengthAdjust="spacingAndGlyphs"><textPath href="#zl18" textLength="32.6" lengthAdjust="spacingAndGlyphs">grandchildren.21</textPath></text><path id="zl19" stroke="none" d="M161.8 273.2Q220.7 273.5 307.1 274.9" fill="none"/><text font-size="6.30" textLength="145.3" lengthAdjust="spacingAndGlyphs"><textPath href="#zl19" textLength="145.3" lengthAdjust="spacingAndGlyphs">Caring for others could also improve your strength. Here’s some-</textPath></text><path id="zl20" stroke="none" d="M155.8 281.3Q216.4 281.6 307.4 282.4" fill="none"/><text font-size="6.37" textLength="151.6" lengthAdjust="spacingAndGlyphs"><textPath href="#zl20" textLength="151.6" lengthAdjust="spacingAndGlyphs">thing you could try with your children before a sports competition.</textPath></text><path id="zl21" stroke="none" d="M155.5 289.6Q216.4 290.0 307.7 290.0" fill="none"/><text font-size="6.43" textLength="152.3" lengthAdjust="spacingAndGlyphs"><textPath href="#zl21" textLength="152.3" lengthAdjust="spacingAndGlyphs">Give them an opportunity to do something kind before they compete.</textPath></text><path id="zl22" stroke="none" d="M155.2 297.9Q177.2 298.1 203.2 298.1" fill="none"/><text font-size="6.49" textLength="48.0" lengthAdjust="spacingAndGlyphs"><textPath href="#zl22" textLength="48.0" lengthAdjust="spacingAndGlyphs">It might help them win.</textPath></text><path id="zl23" stroke="none" d="M160.5 306.3Q220.5 306.7 308.5 305.5" fill="none"/><text font-size="6.55" textLength="147.9" lengthAdjust="spacingAndGlyphs"><textPath href="#zl23" textLength="147.9" lengthAdjust="spacingAndGlyphs">Kurt Gray, a psychology professor at the University of Maryland,</textPath></text><path id="zl24" stroke="none" d="M154.6 314.8Q216.3 315.3 308.9 313.3" fill="none"/><text font-size="6.61" textLength="154.3" lengthAdjust="spacingAndGlyphs"><textPath href="#zl24" textLength="154.3" lengthAdjust="spacingAndGlyphs">led a team of researchers who asked people in a Boston subway sta-</textPath></text><path id="zl25" stroke="none" d="M154.2 323.4Q216.2 323.9 309.2 321.2" fill="none"/><text font-size="6.68" textLength="155.0" lengthAdjust="spacingAndGlyphs"><textPath href="#zl25" textLength="155.0" lengthAdjust="spacingAndGlyphs">tion if they wanted to conduct a strength experiment with a 5-pound</textPath></text><path id="zl26" stroke="none" d="M153.9 332.1Q216.2 332.6 309.7 329.1" fill="none"/><text font-size="6.74" textLength="155.8" lengthAdjust="spacingAndGlyphs"><textPath href="#zl26" textLength="155.8" lengthAdjust="spacingAndGlyphs">(2.3-kilogram) weight. Subjects held the weight away from their bod-</textPath></text><path id="zl27" stroke="none" d="M153.6 340.8Q216.2 341.3 310.1 337.1" fill="none"/><text font-size="6.80" textLength="156.5" lengthAdjust="spacingAndGlyphs"><textPath href="#zl27" textLength="156.5" lengthAdjust="spacingAndGlyphs">ies with a fully extended arm. The researchers asked them to hold it</textPath></text><path id="zl28" stroke="none" d="M153.3 349.7Q216.2 350.1 310.5 345.1" fill="none"/><text font-size="6.86" textLength="157.3" lengthAdjust="spacingAndGlyphs"><textPath href="#zl28" textLength="157.3" lengthAdjust="spacingAndGlyphs">there as long as possible. After testing the subjects’ muscular endur-</textPath></text><path id="zl29" stroke="none" d="M153.0 358.7Q216.2 359.0 310.9 353.2" fill="none"/><text font-size="6.92" textLength="158.1" lengthAdjust="spacingAndGlyphs"><textPath href="#zl29" textLength="158.1" lengthAdjust="spacingAndGlyphs">ance, they let the subjects rest. Then they gave them a dollar for their</textPath></text><path id="zl30" stroke="none" d="M152.7 367.7Q216.2 367.9 311.4 361.4" fill="none"/><text font-size="6.98" textLength="158.9" lengthAdjust="spacingAndGlyphs"><textPath href="#zl30" textLength="158.9" lengthAdjust="spacingAndGlyphs">help. But while doing so, they asked the subjects if they wanted to</textPath></text><path id="zl31" stroke="none" d="M152.4 376.9Q216.2 376.9 311.9 369.6" fill="none"/><text font-size="7.05" textLength="159.7" lengthAdjust="spacingAndGlyphs"><textPath href="#zl31" textLength="159.7" lengthAdjust="spacingAndGlyphs">donate that dollar to UNICEF or keep it for themselves. Then they</textPath></text><path id="zl32" stroke="none" d="M152.1 386.1Q216.2 386.0 312.3 377.9" fill="none"/><text font-size="7.11" textLength="160.5" lengthAdjust="spacingAndGlyphs"><textPath href="#zl32" textLength="160.5" lengthAdjust="spacingAndGlyphs">tested their strength again. Those who donated the money were able</textPath></text></g><rect x="155" y="119" width="156" height="173.4" fill="none" stroke="#1e57d4" stroke-width="0.922"/><rect x="153.67" y="117.67" width="2.66" height="2.66" rx="0.31" fill="#1e57d4"/><rect x="309.67" y="117.67" width="2.66" height="2.66" rx="0.31" fill="#1e57d4"/><rect x="153.67" y="291.07" width="2.66" height="2.66" rx="0.31" fill="#1e57d4"/><rect x="309.67" y="291.07" width="2.66" height="2.66" rx="0.31" fill="#1e57d4"/></g></g></g></svg>
<svg style="left:41px;top:105px" width="72" height="99" viewBox="41 105 72 99"><rect x="42.850" y="106.650" width="68.100" height="94.900" fill="#fff" stroke="#3f6cba" stroke-width="1.300"/><defs><filter id="blt" x="-2%" y="-2%" width="104%" height="104%"><feGaussianBlur stdDeviation="0.450"/></filter></defs><g filter="url(#blt)"><g transform="translate(43.500 110) scale(0.3133) translate(-122.500 -116.500)"><defs><linearGradient id="tpap" x1="0" y1="0" x2="0" y2="1"><stop offset="0" stop-color="#cbc5b9"/><stop offset="0.6" stop-color="#bdb7aa"/><stop offset="1" stop-color="#aaa394"/></linearGradient><linearGradient id="tlp" x1="0" y1="0" x2="0" y2="1"><stop offset="0" stop-color="#e0dacd"/><stop offset="1" stop-color="#c9bfae"/></linearGradient><linearGradient id="tgut" x1="0" y1="0" x2="0" y2="1"><stop offset="0" stop-color="#c4b89f"/><stop offset="0.55" stop-color="#a99d85"/><stop offset="1" stop-color="#8f836b"/></linearGradient><linearGradient id="trm" x1="0" y1="0" x2="0" y2="1"><stop offset="0" stop-color="#d6cfc3"/><stop offset="0.55" stop-color="#cbc1b1"/><stop offset="1" stop-color="#b5a995"/></linearGradient><linearGradient id="trs" x1="0" y1="0" x2="0" y2="1"><stop offset="0" stop-color="#d0c4a6"/><stop offset="0.6" stop-color="#c8bda9"/><stop offset="1" stop-color="#b0a48e"/></linearGradient><linearGradient id="tb1" x1="0" y1="0" x2="1" y2="0"><stop offset="0" stop-color="#8f9ab6"/><stop offset="1" stop-color="#a9b3cd"/></linearGradient><linearGradient id="tb2" x1="0" y1="0" x2="1" y2="0"><stop offset="0" stop-color="#6e7488"/><stop offset="0.1" stop-color="#878ca0"/><stop offset="0.4" stop-color="#9a9ead"/><stop offset="1" stop-color="#b2b7c4"/></linearGradient></defs><rect x="122.5" y="116.5" width="213.2" height="280.8" fill="url(#tpap)"/><polygon points="122.5,116.5 147.3,116.5 132.8,397.3 122.5,397.3" fill="url(#tlp)"/><polygon points="147.3,116.5 156,116.5 156,293 151,293 151,397.3 132.8,397.3" fill="url(#tgut)"/><rect x="151" y="388" width="185" height="9.3" fill="#9d917a"/><rect x="311" y="116.5" width="24.7" height="280.8" fill="url(#trm)"/><polygon points="328.8,116.5 335.7,116.5 335.7,397.3 333.4,397.3 332.2,180" fill="url(#trs)"/><g font-family="'Liberation Serif',serif" fill="#3a3733" stroke="#3a3733" stroke-width="0.08"><text x="0" y="0" font-size="6.3" dominant-baseline="central" transform="translate(135.8 116.8) rotate(45) scale(0.76 1)">y and</text><text x="0" y="0" font-size="6.3" dominant-baseline="central" transform="translate(123.6 116.6) rotate(37) scale(0.76 1)">s & College</text><text x="0" y="0" font-size="6.3" dominant-baseline="central" transform="translate(123 124.6) rotate(37) scale(0.76 1)">s.</text><text x="0" y="0" font-size="6.3" dominant-baseline="central" transform="translate(122.6 132) rotate(36) scale(0.76 1)">tress. Too</text><text x="0" y="0" font-size="6.3" dominant-baseline="central" transform="translate(122.6 140.3) rotate(36) scale(0.76 1)">ealth, a</text><text x="0" y="0" font-size="6.3" dominant-baseline="central" transform="translate(122.6 149.5) rotate(34) scale(0.76 1)">anchers</text><text x="0" y="0" font-size="6.3" dominant-baseline="central" transform="translate(122.6 157.2) rotate(34) scale(0.76 1)">er three</text><text x="0" y="0" font-size="6.3" dominant-baseline="central" transform="translate(122.6 165.4) rotate(34) scale(0.76 1)">indness.</text><text x="0" y="0" font-size="6.3" dominant-baseline="central" transform="translate(122.6 174.5) rotate(33) scale(0.76 1)">acious</text><text x="0" y="0" font-size="6.3" dominant-baseline="central" transform="translate(123 200) rotate(33) scale(0.76 1)">the</text><text x="0" y="0" font-size="6.3" dominant-baseline="central" transform="translate(123 209.7) rotate(33) scale(0.76 1)">he</text><text x="0" y="0" font-size="6.3" dominant-baseline="central" transform="translate(123 217.5) rotate(33) scale(0.76 1)">e,</text><text x="0" y="0" font-size="6.3" dominant-baseline="central" transform="translate(123 225.9) rotate(33) scale(0.76 1)">t-</text><text x="0" y="0" font-size="6.5" dominant-baseline="central" transform="translate(123.5 260.4) rotate(30) scale(0.76 1)">be</text><text x="0" y="0" font-size="6.5" dominant-baseline="central" transform="translate(123.5 269.5) rotate(30) scale(0.76 1)">ie</text><text x="0" y="0" font-size="6.5" dominant-baseline="central" transform="translate(123.5 278.6) rotate(30) scale(0.76 1)">n-</text><text x="0" y="0" font-size="6.5" dominant-baseline="central" transform="translate(123.5 295) rotate(30) scale(0.76 1)">.</text></g><path id="thd" d="M265 123Q286 124.200 303.500 130.400" fill="none"/><text font-family="'Liberation Serif',serif" font-style="italic" font-size="4.8" fill="#3a3733"><textPath href="#thd" textLength="38.5" lengthAdjust="spacingAndGlyphs">Your Real Superpower</textPath></text><text x="305.8" y="131.8" font-family="'Liberation Serif',serif" font-size="4.6" fill="#3a3733" transform="rotate(12 305.8 131.8)">53</text><g font-family="'Liberation Serif',serif" fill="#2a2824" stroke="#2a2824" stroke-width="0.4" opacity="0.75"><path id="tl0" stroke="none" d="M168.1 135.4Q222.9 130.3 303.0 142.5" fill="none"/><text font-size="5.13" textLength="135.4" lengthAdjust="spacingAndGlyphs"><textPath href="#tl0" textLength="135.4" lengthAdjust="spacingAndGlyphs">Some might point to a 1999 study on mortality rates among</textPath></text><path id="tl1" stroke="none" d="M161.7 142.4Q218.3 136.6 303.1 148.9" fill="none"/><text font-size="5.19" textLength="141.9" lengthAdjust="spacingAndGlyphs"><textPath href="#tl1" textLength="141.9" lengthAdjust="spacingAndGlyphs">elderly people who looked after their disabled spouses and argue</textPath></text><path id="tl2" stroke="none" d="M161.4 148.9Q218.1 143.6 303.2 155.4" fill="none"/><text font-size="5.25" textLength="142.3" lengthAdjust="spacingAndGlyphs"><textPath href="#tl2" textLength="142.3" lengthAdjust="spacingAndGlyphs">that kindness and helping others won’t extend your life. But one of</textPath></text><path id="tl3" stroke="none" d="M161.1 155.5Q218.0 150.7 303.4 162.0" fill="none"/><text font-size="5.31" textLength="142.7" lengthAdjust="spacingAndGlyphs"><textPath href="#tl3" textLength="142.7" lengthAdjust="spacingAndGlyphs">that study’s original researchers told Marta Zaraska that they only</textPath></text><path id="tl4" stroke="none" d="M160.8 162.1Q189.3 160.0 225.0 161.6" fill="none"/><text font-size="5.38" textLength="64.3" lengthAdjust="spacingAndGlyphs"><textPath href="#tl4" textLength="64.3" lengthAdjust="spacingAndGlyphs">studied the very old and frail.19</textPath></text><path id="tl5" stroke="none" d="M166.1 168.6Q221.9 165.6 303.6 175.2" fill="none"/><text font-size="5.44" textLength="137.9" lengthAdjust="spacingAndGlyphs"><textPath href="#tl5" textLength="137.9" lengthAdjust="spacingAndGlyphs">Zaraska’s book references several large studies confirming that</textPath></text><path id="tl6" stroke="none" d="M160.1 175.8Q217.6 172.4 303.8 181.9" fill="none"/><text font-size="5.50" textLength="144.0" lengthAdjust="spacingAndGlyphs"><textPath href="#tl6" textLength="144.0" lengthAdjust="spacingAndGlyphs">caring for others helps us live longer. In one such briefly titled</textPath></text><path id="tl7" stroke="none" d="M159.8 182.7Q217.5 179.7 304.0 188.7" fill="none"/><text font-size="5.56" textLength="144.4" lengthAdjust="spacingAndGlyphs"><textPath href="#tl7" textLength="144.4" lengthAdjust="spacingAndGlyphs">study, “Family Caregiving and All-Cause Mortality: Findings from a</textPath></text><path id="tl8" stroke="none" d="M159.5 189.7Q217.4 187.2 304.2 195.6" fill="none"/><text font-size="5.62" textLength="144.9" lengthAdjust="spacingAndGlyphs"><textPath href="#tl8" textLength="144.9" lengthAdjust="spacingAndGlyphs">Population-Based Propensity-Matched Analysis,” researchers found</textPath></text><path id="tl9" stroke="none" d="M159.2 196.9Q217.3 194.6 304.4 202.5" fill="none"/><text font-size="5.69" textLength="145.4" lengthAdjust="spacingAndGlyphs"><textPath href="#tl9" textLength="145.4" lengthAdjust="spacingAndGlyphs">that mortality rates for caregivers were 18 percent lower than for</textPath></text><path id="tl10" stroke="none" d="M158.9 204.1Q217.2 202.2 304.6 209.4" fill="none"/><text font-size="5.75" textLength="145.9" lengthAdjust="spacingAndGlyphs"><textPath href="#tl10" textLength="145.9" lengthAdjust="spacingAndGlyphs">non-caregivers in similar demographic groups.20 And grandparents</textPath></text><path id="tl11" stroke="none" d="M158.6 211.4Q217.1 209.8 304.8 216.5" fill="none"/><text font-size="5.81" textLength="146.4" lengthAdjust="spacingAndGlyphs"><textPath href="#tl11" textLength="146.4" lengthAdjust="spacingAndGlyphs">who spend time caring for their grandchildren appear to experience</textPath></text><path id="tl12" stroke="none" d="M158.3 218.8Q217.0 217.6 305.1 223.6" fill="none"/><text font-size="5.87" textLength="146.9" lengthAdjust="spacingAndGlyphs"><textPath href="#tl12" textLength="146.9" lengthAdjust="spacingAndGlyphs">similar benefits. The Berlin Aging Study found “mortality hazards</textPath></text><path id="tl13" stroke="none" d="M158.0 226.3Q216.9 225.3 305.3 230.7" fill="none"/><text font-size="5.93" textLength="147.4" lengthAdjust="spacingAndGlyphs"><textPath href="#tl13" textLength="147.4" lengthAdjust="spacingAndGlyphs">for grandparents who provided non-custodial childcare were 37%</textPath></text><path id="tl14" stroke="none" d="M157.7 233.9Q216.8 233.2 305.6 237.9" fill="none"/><text font-size="5.99" textLength="148.0" lengthAdjust="spacingAndGlyphs"><textPath href="#tl14" textLength="148.0" lengthAdjust="spacingAndGlyphs">lower than for grandparents who did not provide childcare and for</textPath></text><path id="tl15" stroke="none" d="M157.3 241.6Q216.8 241.1 305.9 245.2" fill="none"/><text font-size="6.06" textLength="148.6" lengthAdjust="spacingAndGlyphs"><textPath href="#tl15" textLength="148.6" lengthAdjust="spacingAndGlyphs">non-grandparents.” And it wasn’t because they were healthier when</textPath></text><path id="tl16" stroke="none" d="M157.0 249.3Q216.7 249.0 306.1 252.5" fill="none"/><text font-size="6.12" textLength="149.1" lengthAdjust="spacingAndGlyphs"><textPath href="#tl16" textLength="149.1" lengthAdjust="spacingAndGlyphs">they began. The research controlled for physical health, age, socio-</textPath></text><path id="tl17" stroke="none" d="M156.7 257.2Q216.6 257.1 306.4 259.9" fill="none"/><text font-size="6.18" textLength="149.7" lengthAdjust="spacingAndGlyphs"><textPath href="#tl17" textLength="149.7" lengthAdjust="spacingAndGlyphs">economic status, and various characteristics of the children and</textPath></text><path id="tl18" stroke="none" d="M156.4 265.2Q171.8 265.2 189.0 265.3" fill="none"/><text font-size="6.24" textLength="32.6" lengthAdjust="spacingAndGlyphs"><textPath href="#tl18" textLength="32.6" lengthAdjust="spacingAndGlyphs">grandchildren.21</textPath></text><path id="tl19" stroke="none" d="M161.8 273.2Q220.7 273.5 307.1 274.9" fill="none"/><text font-size="6.30" textLength="145.3" lengthAdjust="spacingAndGlyphs"><textPath href="#tl19" textLength="145.3" lengthAdjust="spacingAndGlyphs">Caring for others could also improve your strength. Here’s some-</textPath></text><path id="tl20" stroke="none" d="M155.8 281.3Q216.4 281.6 307.4 282.4" fill="none"/><text font-size="6.37" textLength="151.6" lengthAdjust="spacingAndGlyphs"><textPath href="#tl20" textLength="151.6" lengthAdjust="spacingAndGlyphs">thing you could try with your children before a sports competition.</textPath></text><path id="tl21" stroke="none" d="M155.5 289.6Q216.4 290.0 307.7 290.0" fill="none"/><text font-size="6.43" textLength="152.3" lengthAdjust="spacingAndGlyphs"><textPath href="#tl21" textLength="152.3" lengthAdjust="spacingAndGlyphs">Give them an opportunity to do something kind before they compete.</textPath></text><path id="tl22" stroke="none" d="M155.2 297.9Q177.2 298.1 203.2 298.1" fill="none"/><text font-size="6.49" textLength="48.0" lengthAdjust="spacingAndGlyphs"><textPath href="#tl22" textLength="48.0" lengthAdjust="spacingAndGlyphs">It might help them win.</textPath></text><path id="tl23" stroke="none" d="M160.5 306.3Q220.5 306.7 308.5 305.5" fill="none"/><text font-size="6.55" textLength="147.9" lengthAdjust="spacingAndGlyphs"><textPath href="#tl23" textLength="147.9" lengthAdjust="spacingAndGlyphs">Kurt Gray, a psychology professor at the University of Maryland,</textPath></text><path id="tl24" stroke="none" d="M154.6 314.8Q216.3 315.3 308.9 313.3" fill="none"/><text font-size="6.61" textLength="154.3" lengthAdjust="spacingAndGlyphs"><textPath href="#tl24" textLength="154.3" lengthAdjust="spacingAndGlyphs">led a team of researchers who asked people in a Boston subway sta-</textPath></text><path id="tl25" stroke="none" d="M154.2 323.4Q216.2 323.9 309.2 321.2" fill="none"/><text font-size="6.68" textLength="155.0" lengthAdjust="spacingAndGlyphs"><textPath href="#tl25" textLength="155.0" lengthAdjust="spacingAndGlyphs">tion if they wanted to conduct a strength experiment with a 5-pound</textPath></text><path id="tl26" stroke="none" d="M153.9 332.1Q216.2 332.6 309.7 329.1" fill="none"/><text font-size="6.74" textLength="155.8" lengthAdjust="spacingAndGlyphs"><textPath href="#tl26" textLength="155.8" lengthAdjust="spacingAndGlyphs">(2.3-kilogram) weight. Subjects held the weight away from their bod-</textPath></text><path id="tl27" stroke="none" d="M153.6 340.8Q216.2 341.3 310.1 337.1" fill="none"/><text font-size="6.80" textLength="156.5" lengthAdjust="spacingAndGlyphs"><textPath href="#tl27" textLength="156.5" lengthAdjust="spacingAndGlyphs">ies with a fully extended arm. The researchers asked them to hold it</textPath></text><path id="tl28" stroke="none" d="M153.3 349.7Q216.2 350.1 310.5 345.1" fill="none"/><text font-size="6.86" textLength="157.3" lengthAdjust="spacingAndGlyphs"><textPath href="#tl28" textLength="157.3" lengthAdjust="spacingAndGlyphs">there as long as possible. After testing the subjects’ muscular endur-</textPath></text><path id="tl29" stroke="none" d="M153.0 358.7Q216.2 359.0 310.9 353.2" fill="none"/><text font-size="6.92" textLength="158.1" lengthAdjust="spacingAndGlyphs"><textPath href="#tl29" textLength="158.1" lengthAdjust="spacingAndGlyphs">ance, they let the subjects rest. Then they gave them a dollar for their</textPath></text><path id="tl30" stroke="none" d="M152.7 367.7Q216.2 367.9 311.4 361.4" fill="none"/><text font-size="6.98" textLength="158.9" lengthAdjust="spacingAndGlyphs"><textPath href="#tl30" textLength="158.9" lengthAdjust="spacingAndGlyphs">help. But while doing so, they asked the subjects if they wanted to</textPath></text><path id="tl31" stroke="none" d="M152.4 376.9Q216.2 376.9 311.9 369.6" fill="none"/><text font-size="7.05" textLength="159.7" lengthAdjust="spacingAndGlyphs"><textPath href="#tl31" textLength="159.7" lengthAdjust="spacingAndGlyphs">donate that dollar to UNICEF or keep it for themselves. Then they</textPath></text><path id="tl32" stroke="none" d="M152.1 386.1Q216.2 386.0 312.3 377.9" fill="none"/><text font-size="7.11" textLength="160.5" lengthAdjust="spacingAndGlyphs"><textPath href="#tl32" textLength="160.5" lengthAdjust="spacingAndGlyphs">tested their strength again. Those who donated the money were able</textPath></text></g></g></g><rect x="44.400" y="193" width="6.600" height="7" fill="#fff"/><rect x="45.600" y="194.300" width="4.200" height="4.600" fill="#3a3d42"/><path d="M46.200 195.600h3M46.200 196.900h3" stroke="#fff" stroke-width="0.500"/></svg>
<span class="t" style="left:74.8px;top:204px;font-size:9px;color:#222;transform:scaleX(0.698);">1</span>
</div></body></html>
